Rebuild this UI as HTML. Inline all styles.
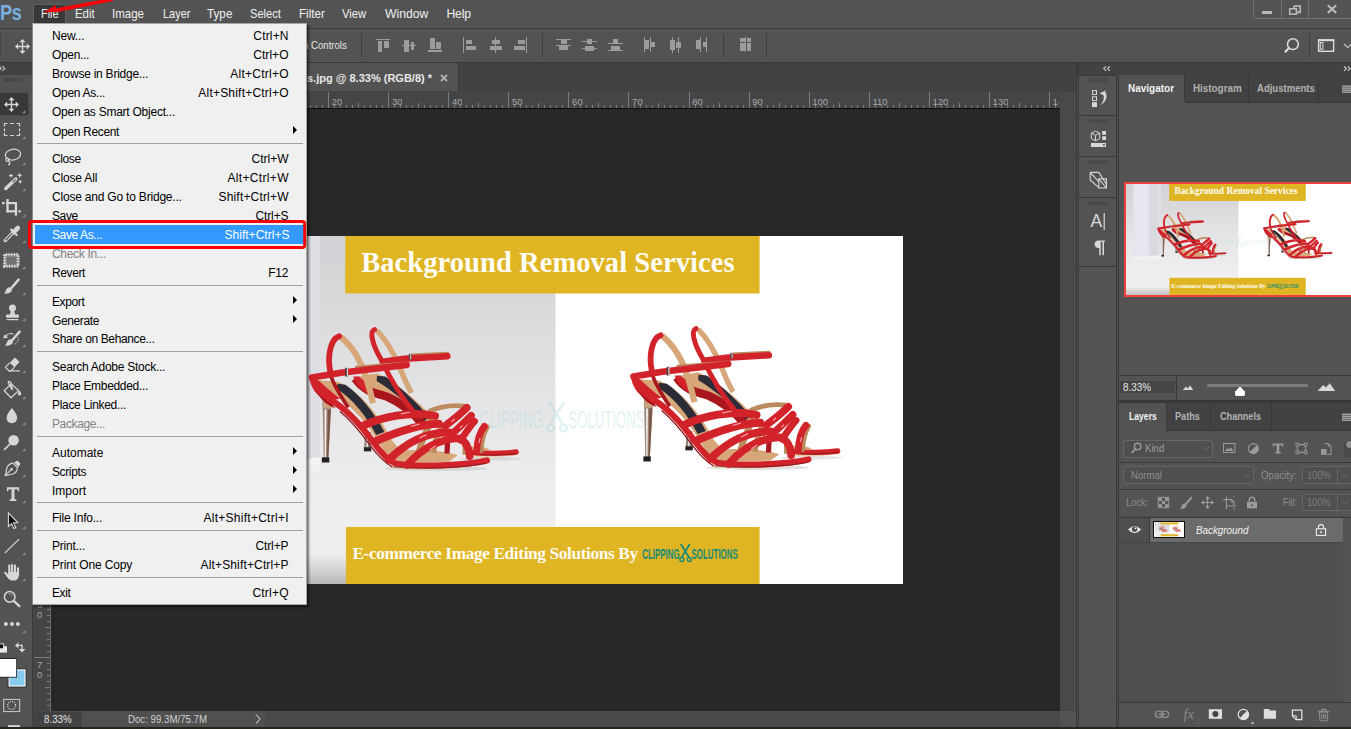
<!DOCTYPE html>
<html>
<head>
<meta charset="utf-8">
<title>Photoshop</title>
<style>
*{box-sizing:border-box;margin:0;padding:0}
html,body{width:1351px;height:729px;overflow:hidden;background:#535353;font-family:"Liberation Sans",sans-serif;font-size:12px;color:#ddd}
.abs{position:absolute}
#root{position:relative;width:1351px;height:729px;overflow:hidden;background:#535353}
svg{position:absolute;overflow:visible}
/* menubar */
#menubar{left:0;top:0;width:1351px;height:29px;background:#535353;border-bottom:1px solid #383838}
#menubar .mi{position:absolute;top:6px;font-size:12.5px;color:#ececec;white-space:pre;line-height:15px}
#filebtn{left:33px;top:4px;width:33px;height:19px;background:#383838;border:1px solid #626262;border-bottom:none;border-radius:2px 2px 0 0}
#optbar{left:0;top:29px;width:1351px;height:34px;background:#535353;border-bottom:1px solid #383838}
#tabbar{left:33px;top:63px;width:1045px;height:28px;background:#424242}
#doctab{left:0;top:0;width:426px;height:28px;background:#535353;border-right:1px solid #383838}
#hruler{left:33px;top:91px;width:1027px;height:18px;background:#454545;border-bottom:1px solid #111}
#vruler{left:33px;top:109px;width:18px;height:602px;background:#454545;border-right:1px solid #6c6c6c}
#canvas{left:51px;top:109px;width:1009px;height:602px;background:#282828;overflow:hidden}
#status{left:33px;top:711px;width:1045px;height:16px;background:#4a4a4a}
#toolbar{left:0;top:63px;width:33px;height:666px;background:#535353}
#gutter{left:1060px;top:92px;width:16px;height:635px;background:#494949}
/* menu */
#menu{left:32px;top:23px;width:275px;height:582px;background:#f0f0f0;border:1px solid #a6a6a6;border-left:1px solid #8a8a8a;box-shadow:2px 2px 2px rgba(0,0,0,.5);color:#000}
.row{position:absolute;left:1px;width:272px;height:19px;font-size:12px;color:#000;line-height:14px}
.row .l{position:absolute;left:18px;top:3px;white-space:pre}
.row .r{position:absolute;right:17.5px;top:3px;white-space:pre;font-size:12px}
.row.dis{color:#838383}
.row.hl{background:#3399ff;color:#fff;left:2px;width:270px}
.row.hl .l{left:17px}
.row.hl .r{right:15.5px}
.sep{position:absolute;left:4px;width:266px;height:1px;background:#a0a0a0}
.arr{position:absolute;right:9px;top:4.5px;width:0;height:0;border-left:4px solid #000;border-top:4px solid transparent;border-bottom:4px solid transparent}
.t{position:absolute;white-space:pre}

</style>
</head>
<body>
<div id="root">
<div id="menubar" class="abs">
<span class="t" style="left:0.2px;top:0.3px;font-size:22px;line-height:26px;font-weight:700;color:#7ab0e4;transform:scaleX(.82);transform-origin:0 0;letter-spacing:-0.2px">Ps</span>
<div id="filebtn" class="abs"></div>
<span class="t" style="left:40.7px;top:6.8px;font-size:12.2px;line-height:15px;color:#f0f0f0;transform:scaleX(0.891);transform-origin:0 50%;">File</span>
<span class="t" style="left:75.3px;top:6.8px;font-size:12.2px;line-height:15px;color:#f0f0f0;transform:scaleX(0.937);transform-origin:0 50%;">Edit</span>
<span class="t" style="left:112.0px;top:6.8px;font-size:12.2px;line-height:15px;color:#f0f0f0;transform:scaleX(0.945);transform-origin:0 50%;">Image</span>
<span class="t" style="left:162.6px;top:6.8px;font-size:12.2px;line-height:15px;color:#f0f0f0;transform:scaleX(0.898);transform-origin:0 50%;">Layer</span>
<span class="t" style="left:206.8px;top:6.8px;font-size:12.2px;line-height:15px;color:#f0f0f0;transform:scaleX(0.961);transform-origin:0 50%;">Type</span>
<span class="t" style="left:250.0px;top:6.8px;font-size:12.2px;line-height:15px;color:#f0f0f0;transform:scaleX(0.912);transform-origin:0 50%;">Select</span>
<span class="t" style="left:299.4px;top:6.8px;font-size:12.2px;line-height:15px;color:#f0f0f0;transform:scaleX(0.956);transform-origin:0 50%;">Filter</span>
<span class="t" style="left:342.3px;top:6.8px;font-size:12.2px;line-height:15px;color:#f0f0f0;transform:scaleX(0.927);transform-origin:0 50%;">View</span>
<span class="t" style="left:385.0px;top:6.8px;font-size:12.2px;line-height:15px;color:#f0f0f0;letter-spacing:0.01px;">Window</span>
<span class="t" style="left:446.5px;top:6.8px;font-size:12.2px;line-height:15px;color:#f0f0f0;letter-spacing:-0.19px;">Help</span>
<div class="abs" style="left:1253px;top:-1px;width:100px;height:20px;border:1px solid #707070;border-radius:0 0 0 4px"></div>
<div class="abs" style="left:1281px;top:0;width:1px;height:18px;background:#707070"></div>
<div class="abs" style="left:1308px;top:0;width:1px;height:18px;background:#707070"></div>
<div class="abs" style="left:1262px;top:11px;width:10px;height:3px;background:#b8b8b8"></div>
<svg style="left:1286px;top:3px" width="18" height="14" viewBox="1286 3 18 14"><path d="M1293.9 6.1h6.3v6.3h-3.2 M1293.9 8v-1.9" fill="none" stroke="#b8b8b8" stroke-width="1.6"/><rect x="1289.7" y="8.8" width="6.7" height="5.4" fill="none" stroke="#b8b8b8" stroke-width="1.6"/></svg>
<svg style="left:1325px;top:3px" width="14" height="12" viewBox="1325 3 14 12"><path d="M1327.8 5.3l8.4 7.6 M1336.2 5.3l-8.4 7.6" fill="none" stroke="#b8b8b8" stroke-width="2.2"/></svg>
</div>

<div id="optbar" class="abs"></div>
<div class="abs" style="left:0px;top:33px;width:1px;height:25px;background:repeating-linear-gradient(180deg,#3e3e3e 0 1px,transparent 1px 2px)"></div>
<svg style="left:15px;top:39px" width="15" height="15" viewBox="0 0 15 15"><path d="M7.5 0l3 3.2h-2.3v3.6h3.6v-2.3l3.2 3-3.2 3v-2.3h-3.6v3.6h2.3l-3 3.2-3-3.2h2.3v-3.6h-3.6v2.3l-3.2-3 3.2-3v2.3h3.6v-3.6h-2.3z" fill="#d6d6d6"/></svg>
<span class="t" style="left:310.8px;top:39.1px;font-size:11px;line-height:13px;color:#e4e4e4;transform:scaleX(0.874);transform-origin:0 50%;">Controls</span>
<span class="t" style="left:299.6px;top:39.1px;font-size:11px;line-height:13px;color:#e4e4e4;">m</span>
<div class="abs" style="left:361px;top:34px;width:1px;height:23px;background:#3d3d3d"></div>
<svg style="left:0;top:0" width="1351" height="70" viewBox="0 0 1351 70" shape-rendering="crispEdges"><rect x="376" y="38.5" width="14" height="1.2" fill="#9c9c9c"/><rect x="377.5" y="41" width="4.5" height="11" fill="#9c9c9c"/><rect x="384" y="41" width="4.5" height="7" fill="#9c9c9c"/><rect x="402" y="45" width="14" height="1.2" fill="#9c9c9c"/><rect x="404" y="39.5" width="4.7" height="12" fill="#9c9c9c"/><rect x="410.5" y="41.5" width="3.7" height="8" fill="#9c9c9c"/><rect x="428" y="50.3" width="14" height="1.2" fill="#9c9c9c"/><rect x="430" y="38" width="4.5" height="11" fill="#9c9c9c"/><rect x="436" y="42" width="4.5" height="7" fill="#9c9c9c"/><rect x="463" y="37" width="1.2" height="15.5" fill="#9c9c9c"/><rect x="465.5" y="40" width="6.5" height="4.2" fill="#9c9c9c"/><rect x="465.5" y="46" width="10.5" height="4.2" fill="#9c9c9c"/><rect x="495" y="37" width="1.2" height="15.5" fill="#9c9c9c"/><rect x="491.5" y="40" width="8" height="4.2" fill="#9c9c9c"/><rect x="489.6" y="46" width="12" height="4.2" fill="#9c9c9c"/><rect x="526.2" y="37" width="1.2" height="15.5" fill="#9c9c9c"/><rect x="518" y="40" width="7" height="4.2" fill="#9c9c9c"/><rect x="514" y="46" width="11" height="4.2" fill="#9c9c9c"/><rect x="556" y="39" width="15" height="1" fill="#9c9c9c"/><rect x="561" y="40" width="5.6" height="4" fill="#9c9c9c"/><rect x="556" y="45.3" width="15" height="1" fill="#9c9c9c"/><rect x="559" y="46.3" width="9" height="3.8" fill="#9c9c9c"/><rect x="582" y="41" width="15" height="1" fill="#9c9c9c"/><rect x="587" y="39" width="5" height="5" fill="#9c9c9c"/><rect x="582" y="48" width="15" height="1" fill="#9c9c9c"/><rect x="585" y="46" width="9" height="5" fill="#9c9c9c"/><rect x="608" y="43.2" width="15" height="1" fill="#9c9c9c"/><rect x="613" y="39" width="5" height="4.2" fill="#9c9c9c"/><rect x="608" y="50.2" width="15" height="1" fill="#9c9c9c"/><rect x="611.4" y="46.3" width="8.6" height="3.9" fill="#9c9c9c"/><rect x="644" y="37" width="1" height="15" fill="#9c9c9c"/><rect x="645" y="40" width="3.8" height="8.8" fill="#9c9c9c"/><rect x="650" y="37" width="1" height="15" fill="#9c9c9c"/><rect x="651" y="42" width="4" height="5" fill="#9c9c9c"/><rect x="672" y="37" width="1" height="16" fill="#9c9c9c"/><rect x="670" y="40" width="5" height="9.5" fill="#9c9c9c"/><rect x="678.2" y="37" width="1" height="16" fill="#9c9c9c"/><rect x="676.4" y="42" width="4.8" height="6" fill="#9c9c9c"/><rect x="700" y="37" width="1" height="15" fill="#9c9c9c"/><rect x="696" y="40" width="4" height="9" fill="#9c9c9c"/><rect x="706" y="37" width="1" height="15" fill="#9c9c9c"/><rect x="703" y="42" width="3" height="5" fill="#9c9c9c"/><rect x="745.2" y="37" width="1" height="15" fill="#9c9c9c"/><rect x="740" y="38" width="4.5" height="3.5" fill="#9c9c9c"/><rect x="740" y="42.8" width="4.5" height="8.2" fill="#9c9c9c"/><rect x="746.9" y="38" width="4.4" height="3.5" fill="#9c9c9c"/><rect x="746.9" y="42.8" width="4.4" height="8.2" fill="#9c9c9c"/></svg>
<div class="abs" style="left:542px;top:34px;width:1px;height:23px;background:#3d3d3d"></div>
<div class="abs" style="left:723px;top:34px;width:1px;height:23px;background:#3d3d3d"></div>
<div class="abs" style="left:766px;top:34px;width:1px;height:23px;background:#3d3d3d"></div>
<svg style="left:1283px;top:36px" width="18" height="18" viewBox="1283 36 18 18"><circle cx="1292.9" cy="44.2" r="5.4" fill="none" stroke="#dcdcdc" stroke-width="1.5"/><path d="M1288.9 48.3l-3.4 3.3" stroke="#dcdcdc" stroke-width="2.2" stroke-linecap="round"/></svg>
<div class="abs" style="left:1309px;top:34px;width:1px;height:23px;background:#3d3d3d"></div>
<svg style="left:1316px;top:37px" width="36" height="17" viewBox="1316 37 36 17"><rect x="1318.6" y="40" width="15" height="11.3" fill="none" stroke="#dcdcdc" stroke-width="1.4"/><rect x="1318" y="39.2" width="16.2" height="2" fill="#dcdcdc"/><rect x="1320.3" y="42.6" width="2.6" height="6.6" fill="none" stroke="#dcdcdc" stroke-width="1"/><path d="M1343.8 43.8l4 3.8 4-3.8" fill="none" stroke="#cfcfcf" stroke-width="1.1"/></svg>

<div id="toolbar" class="abs"></div>
<div class="abs" style="left:0;top:63px;width:32px;height:12px;background:#424242"></div>
<div class="abs" style="left:32px;top:63px;width:1px;height:666px;background:#3c3c3c"></div>
<div class="abs" style="left:-3px;top:92px;width:32px;height:24px;background:#383838;border-radius:3px;border:1px solid #4a4a4a"></div>
<svg style="left:0;top:0" width="34" height="729" viewBox="0 0 34 729"><path d="M-1 66l2.4 2.4-2.4 2.4 M2.4 66l2.4 2.4-2.4 2.4" fill="none" stroke="#c0c0c0" stroke-width="1.1"/><rect x="3" y="78" width="1" height="4" fill="#3e3e3e"/><rect x="5" y="78" width="1" height="4" fill="#3e3e3e"/><rect x="7" y="78" width="1" height="4" fill="#3e3e3e"/><rect x="9" y="78" width="1" height="4" fill="#3e3e3e"/><rect x="11" y="78" width="1" height="4" fill="#3e3e3e"/><rect x="13" y="78" width="1" height="4" fill="#3e3e3e"/><rect x="15" y="78" width="1" height="4" fill="#3e3e3e"/><rect x="17" y="78" width="1" height="4" fill="#3e3e3e"/><rect x="19" y="78" width="1" height="4" fill="#3e3e3e"/><rect x="21" y="78" width="1" height="4" fill="#3e3e3e"/><path d="M25.4 110.1v3.2h-3.2z" fill="#8e8e8e"/><path d="M25.4 136.1v3.2h-3.2z" fill="#8e8e8e"/><path d="M25.4 162.1v3.2h-3.2z" fill="#8e8e8e"/><path d="M25.4 188.1v3.2h-3.2z" fill="#8e8e8e"/><path d="M25.4 214.1v3.2h-3.2z" fill="#8e8e8e"/><path d="M25.4 240.1v3.2h-3.2z" fill="#8e8e8e"/><path d="M25.4 266.1v3.2h-3.2z" fill="#8e8e8e"/><path d="M25.4 292.1v3.2h-3.2z" fill="#8e8e8e"/><path d="M25.4 318.1v3.2h-3.2z" fill="#8e8e8e"/><path d="M25.4 344.1v3.2h-3.2z" fill="#8e8e8e"/><path d="M25.4 370.1v3.2h-3.2z" fill="#8e8e8e"/><path d="M25.4 396.1v3.2h-3.2z" fill="#8e8e8e"/><path d="M25.4 422.1v3.2h-3.2z" fill="#8e8e8e"/><path d="M25.4 448.1v3.2h-3.2z" fill="#8e8e8e"/><path d="M25.4 474.1v3.2h-3.2z" fill="#8e8e8e"/><path d="M25.4 500.1v3.2h-3.2z" fill="#8e8e8e"/><path d="M25.4 526.1v3.2h-3.2z" fill="#8e8e8e"/><path d="M25.4 552.1v3.2h-3.2z" fill="#8e8e8e"/><path d="M25.4 578.1v3.2h-3.2z" fill="#8e8e8e"/><path d="M25.4 630.1v3.2h-3.2z" fill="#8e8e8e"/><g transform="translate(4,97)"><path d="M7.5 0l3 3.2h-2.3v3.6h3.6v-2.3l3.2 3-3.2 3v-2.3h-3.6v3.6h2.3l-3 3.2-3-3.2h2.3v-3.6h-3.6v2.3l-3.2-3 3.2-3v2.3h3.6v-3.6h-2.3z" fill="#d6d6d6"/></g><path d="M4.5 126.5v-3h3 M10 123.5h4 M16.5 123.5h3v3 M19.5 128.5v3 M19.5 133v2.5h-3 M14 135.5h-4 M7.5 135.5h-3v-2.5 M4.5 131.5v-3" fill="none" stroke="#d6d6d6" stroke-width="1.2"/><g fill="none" stroke="#d6d6d6" stroke-width="1.25"><ellipse cx="13" cy="154.6" rx="7.7" ry="5.3" transform="rotate(-10 13 154.6)"/><circle cx="7.4" cy="159.8" r="1.6"/><path d="M8.6 160.9q2 1.6 0.6 3.8h-1.2"/></g><path d="M5.8 188.6l10-9.6" stroke="#d6d6d6" stroke-width="3.4" stroke-linecap="round"/><path d="M13 181.8l2.2-2.1" stroke="#666" stroke-width="1.2" stroke-linecap="round"/><path d="M9.1 175.6h3.8 M11 173.7v3.8" stroke="#d6d6d6" stroke-width="1.1"/><path d="M17.5 175.4h4.2 M19.6 173.3v4.2" stroke="#d6d6d6" stroke-width="1.1"/><path d="M18.599999999999998 181.6h3.2 M20.2 180.0v3.2" stroke="#d6d6d6" stroke-width="1.1"/><g fill="#d6d6d6"><rect x="6.4" y="199" width="2.3" height="13.4"/><rect x="6.4" y="210.2" width="10.6" height="2.2"/><rect x="18.4" y="210.2" width="2.4" height="2.2"/><rect x="14.8" y="202" width="2.3" height="13.6"/><rect x="6" y="202" width="11" height="2.2"/><rect x="2" y="202" width="2.6" height="2.2"/></g><path d="M5.3 240.4l7.6-7.6" stroke="#d6d6d6" stroke-width="3.6" stroke-linecap="round"/><path d="M5.7 240l6.4-6.4" stroke="#555" stroke-width="1.3" stroke-linecap="round"/><path d="M14.2 231.6l3.6-3.6" stroke="#d6d6d6" stroke-width="4.6" stroke-linecap="round"/><path d="M11.2 229.6l5.4 5.4" stroke="#d6d6d6" stroke-width="2.2" stroke-linecap="round"/><rect x="5.4" y="255.2" width="12" height="10.4" fill="#727272"/><rect x="4.7" y="254.6" width="13.4" height="11.6" fill="none" stroke="#d6d6d6" stroke-width="1.1"/><rect x="4.7" y="254.6" width="13.4" height="11.6" fill="none" stroke="#d6d6d6" stroke-width="3.6" stroke-dasharray="1.1 1.55" stroke-dashoffset="-1.2"/><g transform="translate(0,0)"><path d="M18.6 279.6l-7.4 8.6" stroke="#d6d6d6" stroke-width="2.5" stroke-linecap="round"/><path d="M10.6 287.6q-2.8-1-4.2 1.6q-0.8 2.6-2.4 4.4q4.6 0.6 7.2-1.8q1.6-2-0.6-4.2z" fill="#d6d6d6"/></g><g fill="#d6d6d6"><circle cx="12.5" cy="308" r="3.5"/><path d="M11 310.5h3l1.2 4.6h-5.4z"/><rect x="6" y="314.6" width="12.9" height="3.2" rx="0.8"/><rect x="6.6" y="319" width="11.8" height="1.2"/></g><g transform="translate(1,52)"><path d="M18.6 279.6l-7.4 8.6" stroke="#d6d6d6" stroke-width="2.5" stroke-linecap="round"/><path d="M10.6 287.6q-2.8-1-4.2 1.6q-0.8 2.6-2.4 4.4q4.6 0.6 7.2-1.8q1.6-2-0.6-4.2z" fill="#d6d6d6"/></g><path d="M13.4 334q-4.2-1.6-8 2" fill="none" stroke="#d6d6d6" stroke-width="1.2"/><path d="M3 338.2l5.2-0.4-3.4-3.4z" fill="#d6d6d6"/><circle cx="18" cy="337.6" r="0.65" fill="#d6d6d6"/><circle cx="18.2" cy="340" r="0.65" fill="#d6d6d6"/><circle cx="17.2" cy="342.2" r="0.65" fill="#d6d6d6"/><circle cx="15.4" cy="343.8" r="0.65" fill="#d6d6d6"/><path d="M14.9 357.6l4.8 4.3-5.2 5.3-4.8-4.4z" fill="#d6d6d6"/><path d="M9.7 362.8l-4.3 4.4 3.6 3.6h2l3.5-3.6" fill="none" stroke="#d6d6d6" stroke-width="1.2"/><path d="M9 370.9h11" stroke="#d6d6d6" stroke-width="1.2"/><g fill="none" stroke="#d6d6d6" stroke-width="1.3"><path d="M4.2 390.8l7-7 7.4 6.8-7.6 7.2z"/><path d="M11.4 388.4l-3-5.2q-0.6-1.6 0.6-1.8q1.2 0 1.8 1.6l1.4 5"/></g><circle cx="12" cy="389" r="1.1" fill="#d6d6d6"/><path d="M19.6 390.6q2.2 2.6 1.6 4.2q-1.6 1.6-3.2 0q-0.4-2 1.6-4.2z" fill="#d6d6d6"/><path d="M11.8 408q5.6 6.6 5.4 10.2q-0.6 4.8-5.4 5q-4.8-0.2-5.2-5q-0.2-3.6 5.2-10.2z" fill="#d6d6d6"/><circle cx="13.6" cy="440.2" r="5.3" fill="#d6d6d6"/><path d="M10 444l-5.4 5.4" stroke="#d6d6d6" stroke-width="1.7" stroke-linecap="round"/><g fill="none" stroke="#d6d6d6" stroke-width="1.2"><path d="M5.3 475.6l1.6-8q1.6-3.6 6-4.4l4.6 4.6q-0.6 4.6-4.6 6.2z"/><path d="M5.5 475.4l5.6-5.8"/></g><circle cx="11.6" cy="469.2" r="1.3" fill="#d6d6d6"/><path d="M14 462.4l3.4-1.8 3 3-1.8 3.6z" fill="#d6d6d6"/><path d="M6.9 487.2h12.2v4h-1.2l-0.6-1.9h-2.8v9.6l1.8 0.5v1.6h-6.6v-1.6l1.8-0.5v-9.6h-2.8l-0.6 1.9h-1.2z" fill="#d6d6d6"/><path d="M8.4 512.9v13.6l3.1-2.9 2.3 5 2-0.9-2.3-5 4.2-0.2z" fill="#111" stroke="#d6d6d6" stroke-width="1.1" stroke-linejoin="miter"/><path d="M5.2 552.6l13.6-13.2" stroke="#d6d6d6" stroke-width="1.3" stroke-linecap="round"/><g stroke="#d6d6d6" stroke-width="2.1" stroke-linecap="round"><path d="M9.3 565.6v7"/><path d="M12.1 565v7"/><path d="M15 565.6v7"/><path d="M18 568.4v6"/></g><path d="M8.2 572h10.9v3q-0.4 4-3.2 5.6h-5q-2.4-1-4.2-4l-2.8-4q1-1.6 2.6 0l1.7 2z" fill="#d6d6d6"/><circle cx="9.7" cy="596.9" r="5.3" fill="none" stroke="#d6d6d6" stroke-width="1.5"/><path d="M14 601.2l5.4 5" stroke="#d6d6d6" stroke-width="2.3" stroke-linecap="round"/><path d="M8.6 593.6q2.8-0.4 3.8 2.4" fill="none" stroke="#aaa" stroke-width="0.9"/><circle cx="5.9" cy="623.9" r="2" fill="#d6d6d6"/><circle cx="11.9" cy="623.9" r="2" fill="#d6d6d6"/><circle cx="17.9" cy="623.9" r="2" fill="#d6d6d6"/><rect x="-1" y="646.2" width="8" height="6.4" fill="#e6e6e6"/><rect x="-1" y="643.9" width="4.6" height="4.9" fill="#111" stroke="#e6e6e6" stroke-width="0.9"/><path d="M17.5 645.4h4.6v4.6" fill="none" stroke="#d6d6d6" stroke-width="1.3"/><path d="M15 645.4l3.4-3.2v6.4z M22.1 652.4l-3.2-3.4h6.4z" fill="#d6d6d6"/><rect x="7.7" y="668.5" width="18.7" height="18.9" fill="#222"/><rect x="8.5" y="669.3" width="17.1" height="17.3" fill="#fff"/><rect x="9.6" y="670.4" width="14.9" height="15.1" fill="#86caee"/><rect x="-1" y="658.2" width="18" height="19.4" fill="#1c1c1c"/><rect x="-1" y="659" width="17.2" height="17.8" fill="#fff"/><rect x="3.7" y="699.4" width="16" height="12.2" fill="none" stroke="#cfcfcf" stroke-width="1"/><circle cx="11.6" cy="705.5" r="4" fill="none" stroke="#e6e6e6" stroke-width="1.1" stroke-dasharray="1 1.1"/><rect x="8" y="725.2" width="12" height="2" fill="#dcdcdc"/></svg>

<div id="tabbar" class="abs"><div id="doctab" class="abs"></div></div>
<span class="t" style="left:307.0px;top:71.9px;font-size:11px;line-height:13px;color:#e8e8e8;font-weight:700;">s.jpg @ 8.33% (RGB/8) *</span>
<svg style="left:440px;top:74px" width="8" height="8" viewBox="0 0 8 8"><path d="M1 1l6 6M7 1l-6 6" stroke="#b0b0b0" stroke-width="1.8"/></svg>
<div class="abs" style="left:33px;top:91px;width:1045px;height:1px;background:#3c3c3c"></div>
<div id="hruler" class="abs"></div>
<div id="vruler" class="abs"></div>
<div id="canvas" class="abs"></div>
<svg style="left:0;top:0" width="1080" height="729" viewBox="0 0 1080 729" shape-rendering="crispEdges"><rect x="52" y="105" width="1" height="3" fill="#7c7c7c"/><rect x="58" y="103" width="1" height="5" fill="#7c7c7c"/><rect x="64" y="105" width="1" height="3" fill="#7c7c7c"/><rect x="70" y="105" width="1" height="3" fill="#7c7c7c"/><rect x="76" y="105" width="1" height="3" fill="#7c7c7c"/><rect x="82" y="105" width="1" height="3" fill="#7c7c7c"/><rect x="88" y="92" width="1" height="16" fill="#7c7c7c"/><rect x="94" y="105" width="1" height="3" fill="#7c7c7c"/><rect x="100" y="105" width="1" height="3" fill="#7c7c7c"/><rect x="106" y="105" width="1" height="3" fill="#7c7c7c"/><rect x="112" y="105" width="1" height="3" fill="#7c7c7c"/><rect x="118" y="103" width="1" height="5" fill="#7c7c7c"/><rect x="124" y="105" width="1" height="3" fill="#7c7c7c"/><rect x="130" y="105" width="1" height="3" fill="#7c7c7c"/><rect x="136" y="105" width="1" height="3" fill="#7c7c7c"/><rect x="142" y="105" width="1" height="3" fill="#7c7c7c"/><rect x="148" y="92" width="1" height="16" fill="#7c7c7c"/><rect x="154" y="105" width="1" height="3" fill="#7c7c7c"/><rect x="160" y="105" width="1" height="3" fill="#7c7c7c"/><rect x="166" y="105" width="1" height="3" fill="#7c7c7c"/><rect x="172" y="105" width="1" height="3" fill="#7c7c7c"/><rect x="178" y="103" width="1" height="5" fill="#7c7c7c"/><rect x="184" y="105" width="1" height="3" fill="#7c7c7c"/><rect x="190" y="105" width="1" height="3" fill="#7c7c7c"/><rect x="196" y="105" width="1" height="3" fill="#7c7c7c"/><rect x="202" y="105" width="1" height="3" fill="#7c7c7c"/><rect x="208" y="92" width="1" height="16" fill="#7c7c7c"/><rect x="214" y="105" width="1" height="3" fill="#7c7c7c"/><rect x="220" y="105" width="1" height="3" fill="#7c7c7c"/><rect x="226" y="105" width="1" height="3" fill="#7c7c7c"/><rect x="232" y="105" width="1" height="3" fill="#7c7c7c"/><rect x="238" y="103" width="1" height="5" fill="#7c7c7c"/><rect x="244" y="105" width="1" height="3" fill="#7c7c7c"/><rect x="250" y="105" width="1" height="3" fill="#7c7c7c"/><rect x="256" y="105" width="1" height="3" fill="#7c7c7c"/><rect x="262" y="105" width="1" height="3" fill="#7c7c7c"/><rect x="268" y="92" width="1" height="16" fill="#7c7c7c"/><rect x="274" y="105" width="1" height="3" fill="#7c7c7c"/><rect x="280" y="105" width="1" height="3" fill="#7c7c7c"/><rect x="286" y="105" width="1" height="3" fill="#7c7c7c"/><rect x="292" y="105" width="1" height="3" fill="#7c7c7c"/><rect x="298" y="103" width="1" height="5" fill="#7c7c7c"/><rect x="304" y="105" width="1" height="3" fill="#7c7c7c"/><rect x="310" y="105" width="1" height="3" fill="#7c7c7c"/><rect x="316" y="105" width="1" height="3" fill="#7c7c7c"/><rect x="322" y="105" width="1" height="3" fill="#7c7c7c"/><rect x="328" y="92" width="1" height="16" fill="#7c7c7c"/><rect x="334" y="105" width="1" height="3" fill="#7c7c7c"/><rect x="340" y="105" width="1" height="3" fill="#7c7c7c"/><rect x="346" y="105" width="1" height="3" fill="#7c7c7c"/><rect x="352" y="105" width="1" height="3" fill="#7c7c7c"/><rect x="358" y="103" width="1" height="5" fill="#7c7c7c"/><rect x="364" y="105" width="1" height="3" fill="#7c7c7c"/><rect x="370" y="105" width="1" height="3" fill="#7c7c7c"/><rect x="376" y="105" width="1" height="3" fill="#7c7c7c"/><rect x="382" y="105" width="1" height="3" fill="#7c7c7c"/><rect x="388" y="92" width="1" height="16" fill="#7c7c7c"/><rect x="394" y="105" width="1" height="3" fill="#7c7c7c"/><rect x="400" y="105" width="1" height="3" fill="#7c7c7c"/><rect x="406" y="105" width="1" height="3" fill="#7c7c7c"/><rect x="412" y="105" width="1" height="3" fill="#7c7c7c"/><rect x="418" y="103" width="1" height="5" fill="#7c7c7c"/><rect x="424" y="105" width="1" height="3" fill="#7c7c7c"/><rect x="430" y="105" width="1" height="3" fill="#7c7c7c"/><rect x="436" y="105" width="1" height="3" fill="#7c7c7c"/><rect x="442" y="105" width="1" height="3" fill="#7c7c7c"/><rect x="448" y="92" width="1" height="16" fill="#7c7c7c"/><rect x="454" y="105" width="1" height="3" fill="#7c7c7c"/><rect x="460" y="105" width="1" height="3" fill="#7c7c7c"/><rect x="466" y="105" width="1" height="3" fill="#7c7c7c"/><rect x="472" y="105" width="1" height="3" fill="#7c7c7c"/><rect x="478" y="103" width="1" height="5" fill="#7c7c7c"/><rect x="484" y="105" width="1" height="3" fill="#7c7c7c"/><rect x="490" y="105" width="1" height="3" fill="#7c7c7c"/><rect x="496" y="105" width="1" height="3" fill="#7c7c7c"/><rect x="502" y="105" width="1" height="3" fill="#7c7c7c"/><rect x="508" y="92" width="1" height="16" fill="#7c7c7c"/><rect x="514" y="105" width="1" height="3" fill="#7c7c7c"/><rect x="520" y="105" width="1" height="3" fill="#7c7c7c"/><rect x="526" y="105" width="1" height="3" fill="#7c7c7c"/><rect x="532" y="105" width="1" height="3" fill="#7c7c7c"/><rect x="538" y="103" width="1" height="5" fill="#7c7c7c"/><rect x="544" y="105" width="1" height="3" fill="#7c7c7c"/><rect x="550" y="105" width="1" height="3" fill="#7c7c7c"/><rect x="556" y="105" width="1" height="3" fill="#7c7c7c"/><rect x="562" y="105" width="1" height="3" fill="#7c7c7c"/><rect x="568" y="92" width="1" height="16" fill="#7c7c7c"/><rect x="574" y="105" width="1" height="3" fill="#7c7c7c"/><rect x="580" y="105" width="1" height="3" fill="#7c7c7c"/><rect x="586" y="105" width="1" height="3" fill="#7c7c7c"/><rect x="592" y="105" width="1" height="3" fill="#7c7c7c"/><rect x="598" y="103" width="1" height="5" fill="#7c7c7c"/><rect x="604" y="105" width="1" height="3" fill="#7c7c7c"/><rect x="610" y="105" width="1" height="3" fill="#7c7c7c"/><rect x="616" y="105" width="1" height="3" fill="#7c7c7c"/><rect x="622" y="105" width="1" height="3" fill="#7c7c7c"/><rect x="628" y="92" width="1" height="16" fill="#7c7c7c"/><rect x="634" y="105" width="1" height="3" fill="#7c7c7c"/><rect x="640" y="105" width="1" height="3" fill="#7c7c7c"/><rect x="646" y="105" width="1" height="3" fill="#7c7c7c"/><rect x="652" y="105" width="1" height="3" fill="#7c7c7c"/><rect x="658" y="103" width="1" height="5" fill="#7c7c7c"/><rect x="664" y="105" width="1" height="3" fill="#7c7c7c"/><rect x="670" y="105" width="1" height="3" fill="#7c7c7c"/><rect x="676" y="105" width="1" height="3" fill="#7c7c7c"/><rect x="683" y="105" width="1" height="3" fill="#7c7c7c"/><rect x="689" y="92" width="1" height="16" fill="#7c7c7c"/><rect x="695" y="105" width="1" height="3" fill="#7c7c7c"/><rect x="701" y="105" width="1" height="3" fill="#7c7c7c"/><rect x="707" y="105" width="1" height="3" fill="#7c7c7c"/><rect x="713" y="105" width="1" height="3" fill="#7c7c7c"/><rect x="719" y="103" width="1" height="5" fill="#7c7c7c"/><rect x="725" y="105" width="1" height="3" fill="#7c7c7c"/><rect x="731" y="105" width="1" height="3" fill="#7c7c7c"/><rect x="737" y="105" width="1" height="3" fill="#7c7c7c"/><rect x="743" y="105" width="1" height="3" fill="#7c7c7c"/><rect x="749" y="92" width="1" height="16" fill="#7c7c7c"/><rect x="755" y="105" width="1" height="3" fill="#7c7c7c"/><rect x="761" y="105" width="1" height="3" fill="#7c7c7c"/><rect x="767" y="105" width="1" height="3" fill="#7c7c7c"/><rect x="773" y="105" width="1" height="3" fill="#7c7c7c"/><rect x="779" y="103" width="1" height="5" fill="#7c7c7c"/><rect x="785" y="105" width="1" height="3" fill="#7c7c7c"/><rect x="791" y="105" width="1" height="3" fill="#7c7c7c"/><rect x="797" y="105" width="1" height="3" fill="#7c7c7c"/><rect x="803" y="105" width="1" height="3" fill="#7c7c7c"/><rect x="809" y="92" width="1" height="16" fill="#7c7c7c"/><rect x="815" y="105" width="1" height="3" fill="#7c7c7c"/><rect x="821" y="105" width="1" height="3" fill="#7c7c7c"/><rect x="827" y="105" width="1" height="3" fill="#7c7c7c"/><rect x="833" y="105" width="1" height="3" fill="#7c7c7c"/><rect x="839" y="103" width="1" height="5" fill="#7c7c7c"/><rect x="845" y="105" width="1" height="3" fill="#7c7c7c"/><rect x="851" y="105" width="1" height="3" fill="#7c7c7c"/><rect x="857" y="105" width="1" height="3" fill="#7c7c7c"/><rect x="863" y="105" width="1" height="3" fill="#7c7c7c"/><rect x="869" y="92" width="1" height="16" fill="#7c7c7c"/><rect x="875" y="105" width="1" height="3" fill="#7c7c7c"/><rect x="881" y="105" width="1" height="3" fill="#7c7c7c"/><rect x="887" y="105" width="1" height="3" fill="#7c7c7c"/><rect x="893" y="105" width="1" height="3" fill="#7c7c7c"/><rect x="899" y="103" width="1" height="5" fill="#7c7c7c"/><rect x="905" y="105" width="1" height="3" fill="#7c7c7c"/><rect x="911" y="105" width="1" height="3" fill="#7c7c7c"/><rect x="917" y="105" width="1" height="3" fill="#7c7c7c"/><rect x="923" y="105" width="1" height="3" fill="#7c7c7c"/><rect x="929" y="92" width="1" height="16" fill="#7c7c7c"/><rect x="935" y="105" width="1" height="3" fill="#7c7c7c"/><rect x="941" y="105" width="1" height="3" fill="#7c7c7c"/><rect x="947" y="105" width="1" height="3" fill="#7c7c7c"/><rect x="953" y="105" width="1" height="3" fill="#7c7c7c"/><rect x="959" y="103" width="1" height="5" fill="#7c7c7c"/><rect x="965" y="105" width="1" height="3" fill="#7c7c7c"/><rect x="971" y="105" width="1" height="3" fill="#7c7c7c"/><rect x="977" y="105" width="1" height="3" fill="#7c7c7c"/><rect x="983" y="105" width="1" height="3" fill="#7c7c7c"/><rect x="989" y="92" width="1" height="16" fill="#7c7c7c"/><rect x="995" y="105" width="1" height="3" fill="#7c7c7c"/><rect x="1001" y="105" width="1" height="3" fill="#7c7c7c"/><rect x="1007" y="105" width="1" height="3" fill="#7c7c7c"/><rect x="1013" y="105" width="1" height="3" fill="#7c7c7c"/><rect x="1019" y="103" width="1" height="5" fill="#7c7c7c"/><rect x="1025" y="105" width="1" height="3" fill="#7c7c7c"/><rect x="1031" y="105" width="1" height="3" fill="#7c7c7c"/><rect x="1037" y="105" width="1" height="3" fill="#7c7c7c"/><rect x="1043" y="105" width="1" height="3" fill="#7c7c7c"/><rect x="1049" y="92" width="1" height="16" fill="#7c7c7c"/><rect x="1055" y="105" width="1" height="3" fill="#7c7c7c"/><rect x="47" y="111" width="3" height="1" fill="#7c7c7c"/><rect x="34" y="117" width="16" height="1" fill="#7c7c7c"/><rect x="47" y="123" width="3" height="1" fill="#7c7c7c"/><rect x="47" y="129" width="3" height="1" fill="#7c7c7c"/><rect x="47" y="135" width="3" height="1" fill="#7c7c7c"/><rect x="47" y="141" width="3" height="1" fill="#7c7c7c"/><rect x="45" y="147" width="5" height="1" fill="#7c7c7c"/><rect x="47" y="153" width="3" height="1" fill="#7c7c7c"/><rect x="47" y="159" width="3" height="1" fill="#7c7c7c"/><rect x="47" y="165" width="3" height="1" fill="#7c7c7c"/><rect x="47" y="171" width="3" height="1" fill="#7c7c7c"/><rect x="34" y="177" width="16" height="1" fill="#7c7c7c"/><rect x="47" y="183" width="3" height="1" fill="#7c7c7c"/><rect x="47" y="189" width="3" height="1" fill="#7c7c7c"/><rect x="47" y="195" width="3" height="1" fill="#7c7c7c"/><rect x="47" y="201" width="3" height="1" fill="#7c7c7c"/><rect x="45" y="207" width="5" height="1" fill="#7c7c7c"/><rect x="47" y="213" width="3" height="1" fill="#7c7c7c"/><rect x="47" y="219" width="3" height="1" fill="#7c7c7c"/><rect x="47" y="225" width="3" height="1" fill="#7c7c7c"/><rect x="47" y="231" width="3" height="1" fill="#7c7c7c"/><rect x="34" y="237" width="16" height="1" fill="#7c7c7c"/><rect x="47" y="243" width="3" height="1" fill="#7c7c7c"/><rect x="47" y="249" width="3" height="1" fill="#7c7c7c"/><rect x="47" y="255" width="3" height="1" fill="#7c7c7c"/><rect x="47" y="261" width="3" height="1" fill="#7c7c7c"/><rect x="45" y="267" width="5" height="1" fill="#7c7c7c"/><rect x="47" y="273" width="3" height="1" fill="#7c7c7c"/><rect x="47" y="279" width="3" height="1" fill="#7c7c7c"/><rect x="47" y="285" width="3" height="1" fill="#7c7c7c"/><rect x="47" y="291" width="3" height="1" fill="#7c7c7c"/><rect x="34" y="297" width="16" height="1" fill="#7c7c7c"/><rect x="47" y="303" width="3" height="1" fill="#7c7c7c"/><rect x="47" y="309" width="3" height="1" fill="#7c7c7c"/><rect x="47" y="315" width="3" height="1" fill="#7c7c7c"/><rect x="47" y="321" width="3" height="1" fill="#7c7c7c"/><rect x="45" y="327" width="5" height="1" fill="#7c7c7c"/><rect x="47" y="333" width="3" height="1" fill="#7c7c7c"/><rect x="47" y="339" width="3" height="1" fill="#7c7c7c"/><rect x="47" y="345" width="3" height="1" fill="#7c7c7c"/><rect x="47" y="351" width="3" height="1" fill="#7c7c7c"/><rect x="34" y="357" width="16" height="1" fill="#7c7c7c"/><rect x="47" y="363" width="3" height="1" fill="#7c7c7c"/><rect x="47" y="369" width="3" height="1" fill="#7c7c7c"/><rect x="47" y="375" width="3" height="1" fill="#7c7c7c"/><rect x="47" y="381" width="3" height="1" fill="#7c7c7c"/><rect x="45" y="387" width="5" height="1" fill="#7c7c7c"/><rect x="47" y="393" width="3" height="1" fill="#7c7c7c"/><rect x="47" y="399" width="3" height="1" fill="#7c7c7c"/><rect x="47" y="405" width="3" height="1" fill="#7c7c7c"/><rect x="47" y="411" width="3" height="1" fill="#7c7c7c"/><rect x="34" y="417" width="16" height="1" fill="#7c7c7c"/><rect x="47" y="423" width="3" height="1" fill="#7c7c7c"/><rect x="47" y="429" width="3" height="1" fill="#7c7c7c"/><rect x="47" y="435" width="3" height="1" fill="#7c7c7c"/><rect x="47" y="441" width="3" height="1" fill="#7c7c7c"/><rect x="45" y="447" width="5" height="1" fill="#7c7c7c"/><rect x="47" y="453" width="3" height="1" fill="#7c7c7c"/><rect x="47" y="459" width="3" height="1" fill="#7c7c7c"/><rect x="47" y="465" width="3" height="1" fill="#7c7c7c"/><rect x="47" y="471" width="3" height="1" fill="#7c7c7c"/><rect x="34" y="477" width="16" height="1" fill="#7c7c7c"/><rect x="47" y="483" width="3" height="1" fill="#7c7c7c"/><rect x="47" y="489" width="3" height="1" fill="#7c7c7c"/><rect x="47" y="495" width="3" height="1" fill="#7c7c7c"/><rect x="47" y="501" width="3" height="1" fill="#7c7c7c"/><rect x="45" y="507" width="5" height="1" fill="#7c7c7c"/><rect x="47" y="513" width="3" height="1" fill="#7c7c7c"/><rect x="47" y="519" width="3" height="1" fill="#7c7c7c"/><rect x="47" y="525" width="3" height="1" fill="#7c7c7c"/><rect x="47" y="531" width="3" height="1" fill="#7c7c7c"/><rect x="34" y="537" width="16" height="1" fill="#7c7c7c"/><rect x="47" y="543" width="3" height="1" fill="#7c7c7c"/><rect x="47" y="549" width="3" height="1" fill="#7c7c7c"/><rect x="47" y="555" width="3" height="1" fill="#7c7c7c"/><rect x="47" y="561" width="3" height="1" fill="#7c7c7c"/><rect x="45" y="567" width="5" height="1" fill="#7c7c7c"/><rect x="47" y="573" width="3" height="1" fill="#7c7c7c"/><rect x="47" y="579" width="3" height="1" fill="#7c7c7c"/><rect x="47" y="585" width="3" height="1" fill="#7c7c7c"/><rect x="47" y="591" width="3" height="1" fill="#7c7c7c"/><rect x="34" y="597" width="16" height="1" fill="#7c7c7c"/><rect x="47" y="603" width="3" height="1" fill="#7c7c7c"/><rect x="47" y="609" width="3" height="1" fill="#7c7c7c"/><rect x="47" y="615" width="3" height="1" fill="#7c7c7c"/><rect x="47" y="621" width="3" height="1" fill="#7c7c7c"/><rect x="45" y="627" width="5" height="1" fill="#7c7c7c"/><rect x="47" y="633" width="3" height="1" fill="#7c7c7c"/><rect x="47" y="639" width="3" height="1" fill="#7c7c7c"/><rect x="47" y="645" width="3" height="1" fill="#7c7c7c"/><rect x="47" y="651" width="3" height="1" fill="#7c7c7c"/><rect x="34" y="657" width="16" height="1" fill="#7c7c7c"/><rect x="47" y="663" width="3" height="1" fill="#7c7c7c"/><rect x="47" y="669" width="3" height="1" fill="#7c7c7c"/><rect x="47" y="675" width="3" height="1" fill="#7c7c7c"/><rect x="47" y="681" width="3" height="1" fill="#7c7c7c"/><rect x="45" y="687" width="5" height="1" fill="#7c7c7c"/><rect x="47" y="693" width="3" height="1" fill="#7c7c7c"/><rect x="47" y="699" width="3" height="1" fill="#7c7c7c"/><rect x="47" y="705" width="3" height="1" fill="#7c7c7c"/></svg>
<span class="t" style="left:91.5px;top:95.9px;font-size:9.5px;line-height:11px;color:#a4a8ae;overflow:hidden;max-width:967px;">20</span>
<span class="t" style="left:151.6px;top:95.9px;font-size:9.5px;line-height:11px;color:#a4a8ae;overflow:hidden;max-width:907px;">10</span>
<span class="t" style="left:211.6px;top:95.9px;font-size:9.5px;line-height:11px;color:#a4a8ae;overflow:hidden;max-width:847px;">0</span>
<span class="t" style="left:271.7px;top:95.9px;font-size:9.5px;line-height:11px;color:#a4a8ae;overflow:hidden;max-width:787px;">10</span>
<span class="t" style="left:331.8px;top:95.9px;font-size:9.5px;line-height:11px;color:#a4a8ae;overflow:hidden;max-width:727px;">20</span>
<span class="t" style="left:391.9px;top:95.9px;font-size:9.5px;line-height:11px;color:#a4a8ae;overflow:hidden;max-width:667px;">30</span>
<span class="t" style="left:451.9px;top:95.9px;font-size:9.5px;line-height:11px;color:#a4a8ae;overflow:hidden;max-width:607px;">40</span>
<span class="t" style="left:512.0px;top:95.9px;font-size:9.5px;line-height:11px;color:#a4a8ae;overflow:hidden;max-width:547px;">50</span>
<span class="t" style="left:572.1px;top:95.9px;font-size:9.5px;line-height:11px;color:#a4a8ae;overflow:hidden;max-width:487px;">60</span>
<span class="t" style="left:632.1px;top:95.9px;font-size:9.5px;line-height:11px;color:#a4a8ae;overflow:hidden;max-width:427px;">70</span>
<span class="t" style="left:692.2px;top:95.9px;font-size:9.5px;line-height:11px;color:#a4a8ae;overflow:hidden;max-width:366px;">80</span>
<span class="t" style="left:752.3px;top:95.9px;font-size:9.5px;line-height:11px;color:#a4a8ae;overflow:hidden;max-width:306px;">90</span>
<span class="t" style="left:812.3px;top:95.9px;font-size:9.5px;line-height:11px;color:#a4a8ae;overflow:hidden;max-width:246px;">100</span>
<span class="t" style="left:872.4px;top:95.9px;font-size:9.5px;line-height:11px;color:#a4a8ae;overflow:hidden;max-width:186px;">110</span>
<span class="t" style="left:932.5px;top:95.9px;font-size:9.5px;line-height:11px;color:#a4a8ae;overflow:hidden;max-width:126px;">120</span>
<span class="t" style="left:992.6px;top:95.9px;font-size:9.5px;line-height:11px;color:#a4a8ae;overflow:hidden;max-width:66px;">130</span>
<span class="t" style="left:1052.6px;top:95.9px;font-size:9.5px;line-height:11px;color:#a4a8ae;overflow:hidden;max-width:6px;">140</span>
<span class="t" style="left:37.0px;top:118.7px;font-size:9.5px;line-height:11px;color:#a4a8ae;">2</span>
<span class="t" style="left:37.0px;top:129.0px;font-size:9.5px;line-height:11px;color:#a4a8ae;">0</span>
<span class="t" style="left:37.0px;top:178.7px;font-size:9.5px;line-height:11px;color:#a4a8ae;">1</span>
<span class="t" style="left:37.0px;top:189.0px;font-size:9.5px;line-height:11px;color:#a4a8ae;">0</span>
<span class="t" style="left:37.0px;top:238.7px;font-size:9.5px;line-height:11px;color:#a4a8ae;">0</span>
<span class="t" style="left:37.0px;top:298.7px;font-size:9.5px;line-height:11px;color:#a4a8ae;">1</span>
<span class="t" style="left:37.0px;top:309.0px;font-size:9.5px;line-height:11px;color:#a4a8ae;">0</span>
<span class="t" style="left:37.0px;top:358.7px;font-size:9.5px;line-height:11px;color:#a4a8ae;">2</span>
<span class="t" style="left:37.0px;top:369.0px;font-size:9.5px;line-height:11px;color:#a4a8ae;">0</span>
<span class="t" style="left:37.0px;top:418.7px;font-size:9.5px;line-height:11px;color:#a4a8ae;">3</span>
<span class="t" style="left:37.0px;top:429.0px;font-size:9.5px;line-height:11px;color:#a4a8ae;">0</span>
<span class="t" style="left:37.0px;top:478.7px;font-size:9.5px;line-height:11px;color:#a4a8ae;">4</span>
<span class="t" style="left:37.0px;top:489.0px;font-size:9.5px;line-height:11px;color:#a4a8ae;">0</span>
<span class="t" style="left:37.0px;top:538.7px;font-size:9.5px;line-height:11px;color:#a4a8ae;">5</span>
<span class="t" style="left:37.0px;top:549.0px;font-size:9.5px;line-height:11px;color:#a4a8ae;">0</span>
<span class="t" style="left:37.0px;top:598.7px;font-size:9.5px;line-height:11px;color:#a4a8ae;">6</span>
<span class="t" style="left:37.0px;top:609.0px;font-size:9.5px;line-height:11px;color:#a4a8ae;">0</span>
<span class="t" style="left:37.0px;top:658.7px;font-size:9.5px;line-height:11px;color:#a4a8ae;">7</span>
<span class="t" style="left:37.0px;top:669.0px;font-size:9.5px;line-height:11px;color:#a4a8ae;">0</span>
<svg style="left:0;top:0" width="0" height="0"><defs><linearGradient id="gbg" x1="0" y1="0" x2="0" y2="1"><stop offset="0" stop-color="#d2d2d6"/><stop offset=".2" stop-color="#d9d9dc"/><stop offset=".5" stop-color="#e6e6e8"/><stop offset=".8" stop-color="#efefef"/><stop offset="1" stop-color="#ededed"/></linearGradient><linearGradient id="gbx" x1="0" y1="0" x2="0" y2="1"><stop offset="0" stop-color="#fff" stop-opacity=".6"/><stop offset="1" stop-color="#fff" stop-opacity="0"/></linearGradient><linearGradient id="gsh" x1="0" y1="0" x2="0" y2="1"><stop offset="0" stop-color="#969696" stop-opacity="0"/><stop offset="1" stop-color="#969696" stop-opacity=".6"/></linearGradient><symbol id="pic" viewBox="0 0 695 348"><rect width="695" height="348" fill="#fff"/><rect width="347.5" height="348" fill="url(#gbg)"/><rect x="28" y="0" width="48" height="227" fill="#e6e6ee"/><rect x="76" y="0" width="27" height="224" fill="#d9d9e0"/><rect x="103" y="0" width="9" height="222" fill="#dedee4"/><path d="M28 227L76 227L112 221L112 236L76 244L28 236Z" fill="url(#gbx)"/><rect x="0" y="318" width="139" height="30" fill="url(#gsh)"/><rect x="137.2" y="0" width="414.4" height="57.5" fill="#dfb523"/><rect x="137.9" y="291" width="413.7" height="57" fill="#dfb523"/><text x="153.2" y="35.7" font-family="'Liberation Serif',serif" font-weight="700" font-size="28.5" textLength="373.3" lengthAdjust="spacing" fill="#fffdf6">Background Removal Services</text><text x="144.4" y="323" font-family="'Liberation Serif',serif" font-weight="700" font-size="17.3" textLength="285.7" lengthAdjust="spacing" fill="#fffdf6">E-commerce Image Editing Solutions By</text><text transform="translate(434.3 323) scale(0.566 1)" font-family="'Liberation Sans',sans-serif" font-weight="700" font-size="14.0" fill="#178a7a" opacity="1">CLIPPING</text><text transform="translate(483.6 323) scale(0.565 1)" font-family="'Liberation Sans',sans-serif" font-weight="700" font-size="14.0" fill="#178a7a" opacity="1">SOLUTIONS</text><g transform="translate(470.8 307) scale(1)" opacity="1" fill="none" stroke="#178a7a"><path d="M2 1l8 13M11 1l-8 13" stroke-width="1.7"/><circle cx="3" cy="16.5" r="2" stroke-width="1.4"/><circle cx="10.5" cy="16.5" r="2" stroke-width="1.4"/></g><text transform="translate(271.6 191.5) scale(0.595 1)" font-family="'Liberation Sans',sans-serif" font-weight="400" font-size="23.0" fill="#8fd0d0" opacity="0.26">CLIPPING</text><text transform="translate(360.6 191.5) scale(0.571 1)" font-family="'Liberation Sans',sans-serif" font-weight="400" font-size="23.0" fill="#8fd0d0" opacity="0.26">SOLUTIONS</text><g transform="translate(337.6 164) scale(1.7)" opacity="0.25" fill="none" stroke="#8fd0d0"><path d="M2 1l8 13M11 1l-8 13" stroke-width="1.7"/><circle cx="3" cy="16.5" r="2" stroke-width="1.4"/><circle cx="10.5" cy="16.5" r="2" stroke-width="1.4"/></g><g transform="translate(96.6 89) scale(0.2058)"><ellipse cx="900" cy="650" rx="150" ry="9" fill="#bdbdbd" opacity=".4"/><path d="M294 520L322 520L324 596L290 596Z" fill="#8f8079"/><path d="M301 520L308 520L308 596L301 596Z" fill="#e6e6e6"/><rect x="288" y="594" width="36" height="20" fill="#262222"/><path d="M800 636C880 642 960 638 1026 628" fill="none" stroke="#e9cfa9" stroke-width="9" stroke-linecap="round" stroke-linejoin="round"/><path d="M786 616C860 624 960 626 1028 617" fill="none" stroke="#d2222a" stroke-width="26" stroke-linecap="round" stroke-linejoin="round"/><path d="M800 628C880 634 960 632 1030 624" fill="none" stroke="#5a1a1a" stroke-width="3" stroke-linecap="butt" stroke-linejoin="round"/><path d="M784 590C860 588 910 600 896 610L800 608Z" fill="#d8a779"/><path d="M350 26C395 70 432 135 462 205C480 250 498 296 520 330" fill="none" stroke="#d8a779" stroke-width="26" stroke-linecap="butt" stroke-linejoin="round"/><path d="M262 250L352 234C445 282 548 362 624 452L574 486C500 405 400 332 318 306Z" fill="#d8a779"/><path d="M352 247L392 250C462 298 552 380 606 450L580 466C516 392 432 322 350 272Z" fill="#2c2c38"/><path d="M246 260C286 320 336 330 400 348C470 378 530 428 576 486" fill="none" stroke="#a9161d" stroke-width="40" stroke-linecap="butt" stroke-linejoin="round"/><path d="M236 250L262 250L330 300L300 330C270 310 246 284 236 250Z" fill="#d2222a"/><path d="M340 22C312 32 332 100 372 168C402 232 452 332 526 416" fill="none" stroke="#d2222a" stroke-width="24" stroke-linecap="round" stroke-linejoin="round"/><path d="M516 144L696 135" fill="none" stroke="#bb8a5e" stroke-width="11" stroke-linecap="round" stroke-linejoin="round"/><path d="M380 178L486 164L694 152" fill="none" stroke="#d2222a" stroke-width="31" stroke-linecap="round" stroke-linejoin="round"/><rect x="506" y="141" width="14" height="27" fill="#5a4a44"/><rect x="513" y="142" width="5" height="24" fill="#cfcfcf"/><path d="M603 420C660 394 720 388 776 394" fill="none" stroke="#bb8a5e" stroke-width="24" stroke-linecap="butt" stroke-linejoin="round"/><path d="M670 500C702 476 752 440 788 402" fill="none" stroke="#d2222a" stroke-width="37" stroke-linecap="round" stroke-linejoin="round"/><path d="M716 530C747 500 782 470 810 440" fill="none" stroke="#d2222a" stroke-width="35" stroke-linecap="round" stroke-linejoin="round"/><path d="M758 560C782 525 802 495 826 468" fill="none" stroke="#d2222a" stroke-width="33" stroke-linecap="round" stroke-linejoin="round"/><path d="M858 612C860 570 874 520 888 496" fill="none" stroke="#bb8a5e" stroke-width="22" stroke-linecap="round" stroke-linejoin="round"/><path d="M836 618C838 570 850 520 874 492" fill="none" stroke="#d2222a" stroke-width="33" stroke-linecap="round" stroke-linejoin="round"/><ellipse cx="640" cy="698" rx="250" ry="11" fill="#bdbdbd" opacity=".45"/><path d="M90 350L156 356C140 380 131 396 129 410L116 644L93 644L88 410C85 390 86 370 90 350Z" fill="#9c8578"/><path d="M94 350L154 356C140 378 133 394 130 406L90 406C88 390 90 370 94 350Z" fill="#c9a380"/><path d="M97 410L106 410L104 644L98 644Z" fill="#f2f2f2"/><path d="M113 410L127 410L115 644L109 644Z" fill="#7b5646"/><rect x="84" y="643" width="36" height="25" fill="#221e1f"/><path d="M420 692C560 704 780 696 884 670" fill="none" stroke="#e9cfa9" stroke-width="9" stroke-linecap="round" stroke-linejoin="round"/><path d="M176 58C222 95 258 155 276 195C296 240 316 305 332 380" fill="none" stroke="#d8a779" stroke-width="30" stroke-linecap="butt" stroke-linejoin="round"/><path d="M70 268L162 276C262 320 352 420 424 560L504 650L420 670C380 600 330 520 290 470C230 400 150 330 70 292Z" fill="#d8a779"/><path d="M160 286L198 290C268 338 336 420 388 520L348 534C300 440 236 362 156 308Z" fill="#2c2c38"/><path d="M440 614C540 600 690 610 744 634L700 664L450 670Z" fill="#d8a779"/><path d="M620 458C592 510 570 560 556 614" fill="none" stroke="#bb8a5e" stroke-width="31" stroke-linecap="butt" stroke-linejoin="round"/><path d="M660 498C642 540 630 585 626 620" fill="none" stroke="#bb8a5e" stroke-width="27" stroke-linecap="butt" stroke-linejoin="round"/><path d="M702 528C692 570 692 600 692 624" fill="none" stroke="#a9161d" stroke-width="25" stroke-linecap="butt" stroke-linejoin="round"/><path d="M777 560C780 590 778 610 778 630" fill="none" stroke="#bb8a5e" stroke-width="22" stroke-linecap="butt" stroke-linejoin="round"/><path d="M22 246C26 300 60 354 116 368L174 358C132 328 96 294 66 268Z" fill="#d2222a"/><path d="M48 300C66 340 92 360 120 368L150 404C100 388 66 350 48 300Z" fill="#a9161d"/><path d="M122 362C198 402 270 482 336 572C366 614 400 656 442 674C560 692 780 682 886 658" fill="none" stroke="#d2222a" stroke-width="30" stroke-linecap="round" stroke-linejoin="round"/><path d="M172 420C222 460 272 520 322 590C352 630 382 664 426 690" fill="none" stroke="#8a1218" stroke-width="6" stroke-linecap="butt" stroke-linejoin="round"/><path d="M430 690C560 702 780 694 884 672" fill="none" stroke="#5a1a1a" stroke-width="3" stroke-linecap="butt" stroke-linejoin="round"/><path d="M126 234C108 150 126 70 168 55" fill="none" stroke="#d2222a" stroke-width="28" stroke-linecap="round" stroke-linejoin="round"/><path d="M126 240C136 280 162 326 212 400" fill="none" stroke="#a9161d" stroke-width="18" stroke-linecap="butt" stroke-linejoin="round"/><path d="M250 204L495 183" fill="none" stroke="#bb8a5e" stroke-width="11" stroke-linecap="round" stroke-linejoin="round"/><path d="M36 255L176 232L496 194" fill="none" stroke="#d2222a" stroke-width="32" stroke-linecap="round" stroke-linejoin="round"/><rect x="197" y="208" width="13" height="42" fill="#4a3a38"/><rect x="205" y="210" width="6" height="37" fill="#d8d8d8"/><path d="M282 490C374 448 512 416 634 442" fill="none" stroke="#d2222a" stroke-width="38" stroke-linecap="round" stroke-linejoin="round"/><path d="M346 564C444 522 560 482 652 480" fill="none" stroke="#d2222a" stroke-width="38" stroke-linecap="round" stroke-linejoin="round"/><path d="M410 654C496 570 582 524 702 522" fill="none" stroke="#d2222a" stroke-width="38" stroke-linecap="round" stroke-linejoin="round"/><path d="M498 680C560 610 642 554 752 550C782 562 802 602 802 638" fill="none" stroke="#d2222a" stroke-width="37" stroke-linecap="round" stroke-linejoin="round"/><path d="M470 432l40-8 M520 492l36-10 M560 548l30-14 M610 606l26-18 M716 468l10-10 M756 500l10-10 M848 570l4-18" fill="none" stroke="#ffd0d0" stroke-width="6" opacity=".75" stroke-linecap="round"/></g><g transform="translate(321.5 -1)"><g transform="translate(96.6 89) scale(0.2058)"><ellipse cx="900" cy="650" rx="150" ry="9" fill="#bdbdbd" opacity=".4"/><path d="M294 520L322 520L324 596L290 596Z" fill="#8f8079"/><path d="M301 520L308 520L308 596L301 596Z" fill="#e6e6e6"/><rect x="288" y="594" width="36" height="20" fill="#262222"/><path d="M800 636C880 642 960 638 1026 628" fill="none" stroke="#e9cfa9" stroke-width="9" stroke-linecap="round" stroke-linejoin="round"/><path d="M786 616C860 624 960 626 1028 617" fill="none" stroke="#d2222a" stroke-width="26" stroke-linecap="round" stroke-linejoin="round"/><path d="M800 628C880 634 960 632 1030 624" fill="none" stroke="#5a1a1a" stroke-width="3" stroke-linecap="butt" stroke-linejoin="round"/><path d="M784 590C860 588 910 600 896 610L800 608Z" fill="#d8a779"/><path d="M350 26C395 70 432 135 462 205C480 250 498 296 520 330" fill="none" stroke="#d8a779" stroke-width="26" stroke-linecap="butt" stroke-linejoin="round"/><path d="M262 250L352 234C445 282 548 362 624 452L574 486C500 405 400 332 318 306Z" fill="#d8a779"/><path d="M352 247L392 250C462 298 552 380 606 450L580 466C516 392 432 322 350 272Z" fill="#2c2c38"/><path d="M246 260C286 320 336 330 400 348C470 378 530 428 576 486" fill="none" stroke="#a9161d" stroke-width="40" stroke-linecap="butt" stroke-linejoin="round"/><path d="M236 250L262 250L330 300L300 330C270 310 246 284 236 250Z" fill="#d2222a"/><path d="M340 22C312 32 332 100 372 168C402 232 452 332 526 416" fill="none" stroke="#d2222a" stroke-width="24" stroke-linecap="round" stroke-linejoin="round"/><path d="M516 144L696 135" fill="none" stroke="#bb8a5e" stroke-width="11" stroke-linecap="round" stroke-linejoin="round"/><path d="M380 178L486 164L694 152" fill="none" stroke="#d2222a" stroke-width="31" stroke-linecap="round" stroke-linejoin="round"/><rect x="506" y="141" width="14" height="27" fill="#5a4a44"/><rect x="513" y="142" width="5" height="24" fill="#cfcfcf"/><path d="M603 420C660 394 720 388 776 394" fill="none" stroke="#bb8a5e" stroke-width="24" stroke-linecap="butt" stroke-linejoin="round"/><path d="M670 500C702 476 752 440 788 402" fill="none" stroke="#d2222a" stroke-width="37" stroke-linecap="round" stroke-linejoin="round"/><path d="M716 530C747 500 782 470 810 440" fill="none" stroke="#d2222a" stroke-width="35" stroke-linecap="round" stroke-linejoin="round"/><path d="M758 560C782 525 802 495 826 468" fill="none" stroke="#d2222a" stroke-width="33" stroke-linecap="round" stroke-linejoin="round"/><path d="M858 612C860 570 874 520 888 496" fill="none" stroke="#bb8a5e" stroke-width="22" stroke-linecap="round" stroke-linejoin="round"/><path d="M836 618C838 570 850 520 874 492" fill="none" stroke="#d2222a" stroke-width="33" stroke-linecap="round" stroke-linejoin="round"/><ellipse cx="640" cy="698" rx="250" ry="11" fill="#bdbdbd" opacity=".45"/><path d="M90 350L156 356C140 380 131 396 129 410L116 644L93 644L88 410C85 390 86 370 90 350Z" fill="#9c8578"/><path d="M94 350L154 356C140 378 133 394 130 406L90 406C88 390 90 370 94 350Z" fill="#c9a380"/><path d="M97 410L106 410L104 644L98 644Z" fill="#f2f2f2"/><path d="M113 410L127 410L115 644L109 644Z" fill="#7b5646"/><rect x="84" y="643" width="36" height="25" fill="#221e1f"/><path d="M420 692C560 704 780 696 884 670" fill="none" stroke="#e9cfa9" stroke-width="9" stroke-linecap="round" stroke-linejoin="round"/><path d="M176 58C222 95 258 155 276 195C296 240 316 305 332 380" fill="none" stroke="#d8a779" stroke-width="30" stroke-linecap="butt" stroke-linejoin="round"/><path d="M70 268L162 276C262 320 352 420 424 560L504 650L420 670C380 600 330 520 290 470C230 400 150 330 70 292Z" fill="#d8a779"/><path d="M160 286L198 290C268 338 336 420 388 520L348 534C300 440 236 362 156 308Z" fill="#2c2c38"/><path d="M440 614C540 600 690 610 744 634L700 664L450 670Z" fill="#d8a779"/><path d="M620 458C592 510 570 560 556 614" fill="none" stroke="#bb8a5e" stroke-width="31" stroke-linecap="butt" stroke-linejoin="round"/><path d="M660 498C642 540 630 585 626 620" fill="none" stroke="#bb8a5e" stroke-width="27" stroke-linecap="butt" stroke-linejoin="round"/><path d="M702 528C692 570 692 600 692 624" fill="none" stroke="#a9161d" stroke-width="25" stroke-linecap="butt" stroke-linejoin="round"/><path d="M777 560C780 590 778 610 778 630" fill="none" stroke="#bb8a5e" stroke-width="22" stroke-linecap="butt" stroke-linejoin="round"/><path d="M22 246C26 300 60 354 116 368L174 358C132 328 96 294 66 268Z" fill="#d2222a"/><path d="M48 300C66 340 92 360 120 368L150 404C100 388 66 350 48 300Z" fill="#a9161d"/><path d="M122 362C198 402 270 482 336 572C366 614 400 656 442 674C560 692 780 682 886 658" fill="none" stroke="#d2222a" stroke-width="30" stroke-linecap="round" stroke-linejoin="round"/><path d="M172 420C222 460 272 520 322 590C352 630 382 664 426 690" fill="none" stroke="#8a1218" stroke-width="6" stroke-linecap="butt" stroke-linejoin="round"/><path d="M430 690C560 702 780 694 884 672" fill="none" stroke="#5a1a1a" stroke-width="3" stroke-linecap="butt" stroke-linejoin="round"/><path d="M126 234C108 150 126 70 168 55" fill="none" stroke="#d2222a" stroke-width="28" stroke-linecap="round" stroke-linejoin="round"/><path d="M126 240C136 280 162 326 212 400" fill="none" stroke="#a9161d" stroke-width="18" stroke-linecap="butt" stroke-linejoin="round"/><path d="M250 204L495 183" fill="none" stroke="#bb8a5e" stroke-width="11" stroke-linecap="round" stroke-linejoin="round"/><path d="M36 255L176 232L496 194" fill="none" stroke="#d2222a" stroke-width="32" stroke-linecap="round" stroke-linejoin="round"/><rect x="197" y="208" width="13" height="42" fill="#4a3a38"/><rect x="205" y="210" width="6" height="37" fill="#d8d8d8"/><path d="M282 490C374 448 512 416 634 442" fill="none" stroke="#d2222a" stroke-width="38" stroke-linecap="round" stroke-linejoin="round"/><path d="M346 564C444 522 560 482 652 480" fill="none" stroke="#d2222a" stroke-width="38" stroke-linecap="round" stroke-linejoin="round"/><path d="M410 654C496 570 582 524 702 522" fill="none" stroke="#d2222a" stroke-width="38" stroke-linecap="round" stroke-linejoin="round"/><path d="M498 680C560 610 642 554 752 550C782 562 802 602 802 638" fill="none" stroke="#d2222a" stroke-width="37" stroke-linecap="round" stroke-linejoin="round"/><path d="M470 432l40-8 M520 492l36-10 M560 548l30-14 M610 606l26-18 M716 468l10-10 M756 500l10-10 M848 570l4-18" fill="none" stroke="#ffd0d0" stroke-width="6" opacity=".75" stroke-linecap="round"/></g></g></symbol></defs></svg>
<svg style="left:208.4px;top:235.7px" width="695" height="348" viewBox="0 0 695 348"><use href="#pic" width="695" height="348"/></svg>
<div id="gutter" class="abs"></div>
<div id="status" class="abs"></div>
<div class="abs" style="left:82px;top:711px;width:183px;height:16px;background:#505050"></div>
<div class="abs" style="left:34px;top:712px;width:48px;height:15px;background:#424242"></div>
<span class="t" style="left:44.0px;top:712.5px;font-size:10.5px;line-height:13px;color:#e4e4e4;transform:scaleX(0.930);transform-origin:0 50%;">8.33%</span>
<span class="t" style="left:128.3px;top:712.5px;font-size:10.5px;line-height:13px;color:#cfcfcf;transform:scaleX(0.921);transform-origin:0 50%;">Doc: 99.3M/75.7M</span>
<svg style="left:254px;top:713px" width="8" height="12" viewBox="0 0 8 12"><path d="M2 1.5l4 4.5-4 4.5" fill="none" stroke="#c8c8c8" stroke-width="1.1"/></svg>

<div class="abs" style="left:1076px;top:63px;width:3px;height:666px;background:#3a3a3a;"></div>
<div class="abs" style="left:1077px;top:75px;width:1px;height:654px;background:#4b4b4b;"></div>
<div class="abs" style="left:1116px;top:75px;width:3px;height:654px;background:#3a3a3a;"></div>
<div class="abs" style="left:1117px;top:75px;width:1px;height:654px;background:#4b4b4b;"></div>
<div class="abs" style="left:1060px;top:711px;width:16px;height:16px;background:#535353;"></div>
<div class="abs" style="left:1079px;top:63px;width:40px;height:12px;background:#424242;"></div>
<div class="abs" style="left:1079px;top:75px;width:37px;height:654px;background:#535353;"></div>
<div class="abs" style="left:1079px;top:115px;width:37px;height:1px;background:#383838;"></div>
<div class="abs" style="left:1079px;top:156px;width:37px;height:1px;background:#383838;"></div>
<div class="abs" style="left:1079px;top:197px;width:37px;height:1px;background:#383838;"></div>
<div class="abs" style="left:1079px;top:266px;width:37px;height:1px;background:#383838;"></div>
<div class="abs" style="left:1079px;top:74.5px;width:37px;height:1px;background:#383838;"></div>
<div class="abs" style="left:1119px;top:63px;width:232px;height:12px;background:#424242;"></div>
<div class="abs" style="left:1119px;top:75px;width:232px;height:28px;background:#424242;"></div>
<div class="abs" style="left:1119px;top:102px;width:232px;height:1px;background:#383838;"></div>
<div class="abs" style="left:1119px;top:75px;width:65.5px;height:28px;background:#535353;"></div>
<div class="abs" style="left:1184px;top:75px;width:1px;height:27px;background:#383838;"></div>
<div class="abs" style="left:1248px;top:75px;width:1px;height:27px;background:#383838;"></div>
<div class="abs" style="left:1318px;top:75px;width:1px;height:27px;background:#383838;"></div>
<span class="t" style="left:1128.3px;top:82.2px;font-size:10.5px;line-height:13px;color:#f2f2f2;font-weight:700;transform:scaleX(0.950);transform-origin:0 50%;">Navigator</span>
<span class="t" style="left:1193.3px;top:82.2px;font-size:10.5px;line-height:13px;color:#b2b2b2;font-weight:700;transform:scaleX(0.938);transform-origin:0 50%;">Histogram</span>
<span class="t" style="left:1257.2px;top:82.2px;font-size:10.5px;line-height:13px;color:#b2b2b2;font-weight:700;transform:scaleX(0.909);transform-origin:0 50%;">Adjustments</span>
<div class="abs" style="left:1119px;top:375px;width:232px;height:1px;background:#383838;"></div>
<div class="abs" style="left:1119px;top:400px;width:232px;height:3px;background:#383838;"></div>
<div class="abs" style="left:1120px;top:381px;width:55px;height:12px;background:#454545;"></div>
<span class="t" style="left:1122.9px;top:380.8px;font-size:10.5px;line-height:13px;color:#e8e8e8;transform:scaleX(0.937);transform-origin:0 50%;">8.33%</span>
<div class="abs" style="left:1176px;top:376px;width:1px;height:24px;background:#383838;"></div>
<div class="abs" style="left:1207px;top:384px;width:101px;height:3px;background:#7c7c7c;border-radius:1px"></div>
<div class="abs" style="left:1119px;top:403px;width:232px;height:28px;background:#424242;"></div>
<div class="abs" style="left:1119px;top:430px;width:232px;height:1px;background:#383838;"></div>
<div class="abs" style="left:1119px;top:403px;width:47px;height:28px;background:#535353;"></div>
<div class="abs" style="left:1166px;top:403px;width:1px;height:27px;background:#383838;"></div>
<div class="abs" style="left:1210px;top:403px;width:1px;height:27px;background:#383838;"></div>
<div class="abs" style="left:1271px;top:403px;width:1px;height:27px;background:#383838;"></div>
<span class="t" style="left:1128.6px;top:410.3px;font-size:10.5px;line-height:13px;color:#f2f2f2;font-weight:700;transform:scaleX(0.821);transform-origin:0 50%;">Layers</span>
<span class="t" style="left:1175.3px;top:410.3px;font-size:10.5px;line-height:13px;color:#b2b2b2;font-weight:700;transform:scaleX(0.871);transform-origin:0 50%;">Paths</span>
<span class="t" style="left:1220.2px;top:410.3px;font-size:10.5px;line-height:13px;color:#b2b2b2;font-weight:700;transform:scaleX(0.867);transform-origin:0 50%;">Channels</span>
<div class="abs" style="left:1123px;top:439.5px;width:89.5px;height:18px;background:#4f4f4f;border:1px solid #686868;border-radius:3px"></div>
<span class="t" style="left:1145.0px;top:442.1px;font-size:10.6px;line-height:13px;color:#9c9c9c;transform:scaleX(0.915);transform-origin:0 50%;">Kind</span>
<div class="abs" style="left:1119px;top:462px;width:232px;height:1px;background:#383838;"></div>
<div class="abs" style="left:1123px;top:466.4px;width:130.5px;height:18px;background:#4f4f4f;border:1px solid #646464;border-radius:3px"></div>
<span class="t" style="left:1131.2px;top:469.1px;font-size:10.6px;line-height:13px;color:#8e8e8e;transform:scaleX(0.908);transform-origin:0 50%;">Normal</span>
<span class="t" style="left:1261.4px;top:469.1px;font-size:10.6px;line-height:13px;color:#8e8e8e;transform:scaleX(0.921);transform-origin:0 50%;">Opacity:</span>
<div class="abs" style="left:1302px;top:466.4px;width:52px;height:18px;background:#4f4f4f;border:1px solid #646464;border-radius:3px"></div>
<div class="abs" style="left:1337px;top:467px;width:1px;height:17px;background:#646464;"></div>
<span class="t" style="left:1306.8px;top:469.6px;font-size:10.4px;line-height:12px;color:#7e7e7e;transform:scaleX(0.899);transform-origin:0 50%;">100%</span>
<div class="abs" style="left:1119px;top:489px;width:232px;height:1px;background:#383838;"></div>
<span class="t" style="left:1125.5px;top:496.1px;font-size:10.6px;line-height:13px;color:#8e8e8e;transform:scaleX(0.880);transform-origin:0 50%;">Lock:</span>
<span class="t" style="left:1283.2px;top:496.1px;font-size:10.6px;line-height:13px;color:#8e8e8e;transform:scaleX(0.849);transform-origin:0 50%;">Fill:</span>
<div class="abs" style="left:1302px;top:493.8px;width:52px;height:17.6px;background:#4f4f4f;border:1px solid #646464;border-radius:3px"></div>
<div class="abs" style="left:1337px;top:494.4px;width:1px;height:16.4px;background:#646464;"></div>
<span class="t" style="left:1306.8px;top:496.6px;font-size:10.4px;line-height:12px;color:#7e7e7e;transform:scaleX(0.899);transform-origin:0 50%;">100%</span>
<div class="abs" style="left:1119px;top:516px;width:224px;height:186px;background:#4f4f4f;"></div>
<div class="abs" style="left:1119px;top:516.5px;width:232px;height:1px;background:#383838;"></div>
<div class="abs" style="left:1150px;top:518px;width:193px;height:24px;background:#6b6b6b;"></div>
<div class="abs" style="left:1149px;top:518px;width:1px;height:24px;background:#383838;"></div>
<div class="abs" style="left:1119px;top:542px;width:224px;height:1px;background:#444;"></div>
<div class="abs" style="left:1153px;top:521px;width:32px;height:16.6px;background:#fff;border:1px solid #111"></div>
<svg style="left:1154.5px;top:522px" width="29" height="14.6" viewBox="0 0 695 348" preserveAspectRatio="none"><use href="#pic" width="695" height="348"/></svg>
<span class="t" style="left:1196.2px;top:523.8px;font-size:10.6px;line-height:13px;color:#f2f2f2;font-style:italic;transform:scaleX(0.927);transform-origin:0 50%;">Background</span>
<div class="abs" style="left:1119px;top:702px;width:232px;height:1px;background:#383838;"></div>
<svg style="left:1124px;top:182px" width="229" height="114.6" viewBox="0 0 695 348" preserveAspectRatio="none"><use href="#pic" width="695" height="348"/></svg>
<div class="abs" style="left:1123.6px;top:181.7px;width:232px;height:115.2px;background:transparent;border:2px solid #f0413f"></div>
<svg style="left:0;top:0" width="1351" height="729" viewBox="0 0 1351 729"><path d="M1106 66.4l-2.3 2.2 2.3 2.2 M1109.8 66.4l-2.3 2.2 2.3 2.2" fill="none" stroke="#cdcdcd" stroke-width="1.15"/><path d="M1344 66.4l2.3 2.2-2.3 2.2 M1347.8 66.4l2.3 2.2-2.3 2.2" fill="none" stroke="#cdcdcd" stroke-width="1.15"/><rect x="1088.0" y="78.2" width="1" height="3.8" fill="#424242"/><rect x="1090.0" y="78.2" width="1" height="3.8" fill="#424242"/><rect x="1092.1" y="78.2" width="1" height="3.8" fill="#424242"/><rect x="1094.2" y="78.2" width="1" height="3.8" fill="#424242"/><rect x="1096.2" y="78.2" width="1" height="3.8" fill="#424242"/><rect x="1098.2" y="78.2" width="1" height="3.8" fill="#424242"/><rect x="1100.3" y="78.2" width="1" height="3.8" fill="#424242"/><rect x="1102.3" y="78.2" width="1" height="3.8" fill="#424242"/><rect x="1104.4" y="78.2" width="1" height="3.8" fill="#424242"/><rect x="1106.5" y="78.2" width="1" height="3.8" fill="#424242"/><rect x="1088.0" y="119.3" width="1" height="3.8" fill="#424242"/><rect x="1090.0" y="119.3" width="1" height="3.8" fill="#424242"/><rect x="1092.1" y="119.3" width="1" height="3.8" fill="#424242"/><rect x="1094.2" y="119.3" width="1" height="3.8" fill="#424242"/><rect x="1096.2" y="119.3" width="1" height="3.8" fill="#424242"/><rect x="1098.2" y="119.3" width="1" height="3.8" fill="#424242"/><rect x="1100.3" y="119.3" width="1" height="3.8" fill="#424242"/><rect x="1102.3" y="119.3" width="1" height="3.8" fill="#424242"/><rect x="1104.4" y="119.3" width="1" height="3.8" fill="#424242"/><rect x="1106.5" y="119.3" width="1" height="3.8" fill="#424242"/><rect x="1088.0" y="160.4" width="1" height="3.8" fill="#424242"/><rect x="1090.0" y="160.4" width="1" height="3.8" fill="#424242"/><rect x="1092.1" y="160.4" width="1" height="3.8" fill="#424242"/><rect x="1094.2" y="160.4" width="1" height="3.8" fill="#424242"/><rect x="1096.2" y="160.4" width="1" height="3.8" fill="#424242"/><rect x="1098.2" y="160.4" width="1" height="3.8" fill="#424242"/><rect x="1100.3" y="160.4" width="1" height="3.8" fill="#424242"/><rect x="1102.3" y="160.4" width="1" height="3.8" fill="#424242"/><rect x="1104.4" y="160.4" width="1" height="3.8" fill="#424242"/><rect x="1106.5" y="160.4" width="1" height="3.8" fill="#424242"/><rect x="1088.0" y="201.4" width="1" height="3.8" fill="#424242"/><rect x="1090.0" y="201.4" width="1" height="3.8" fill="#424242"/><rect x="1092.1" y="201.4" width="1" height="3.8" fill="#424242"/><rect x="1094.2" y="201.4" width="1" height="3.8" fill="#424242"/><rect x="1096.2" y="201.4" width="1" height="3.8" fill="#424242"/><rect x="1098.2" y="201.4" width="1" height="3.8" fill="#424242"/><rect x="1100.3" y="201.4" width="1" height="3.8" fill="#424242"/><rect x="1102.3" y="201.4" width="1" height="3.8" fill="#424242"/><rect x="1104.4" y="201.4" width="1" height="3.8" fill="#424242"/><rect x="1106.5" y="201.4" width="1" height="3.8" fill="#424242"/><rect x="1342" y="85.6" width="9" height="1" fill="#cfcfcf"/><rect x="1342" y="87.6" width="9" height="1" fill="#cfcfcf"/><rect x="1342" y="89.6" width="9" height="1" fill="#cfcfcf"/><rect x="1342" y="91.6" width="9" height="1" fill="#cfcfcf"/><rect x="1342" y="413.7" width="9" height="1" fill="#cfcfcf"/><rect x="1342" y="415.7" width="9" height="1" fill="#cfcfcf"/><rect x="1342" y="417.7" width="9" height="1" fill="#cfcfcf"/><rect x="1342" y="419.7" width="9" height="1" fill="#cfcfcf"/><g fill="none" stroke="#d8d8d8" stroke-width="1"><rect x="1092.5" y="90.6" width="4" height="3.8"/><rect x="1092.5" y="96.8" width="4" height="3.8"/></g><rect x="1092" y="102.2" width="5" height="4.8" fill="#d8d8d8"/><path d="M1100.4 105.2Q1108 101 1106.2 93L1103.4 93.6Q1105 100.4 1100.4 105.2Z" fill="#d8d8d8"/><path d="M1099.6 93.2L1105.6 90.4L1105 96Z" fill="#d8d8d8"/><g fill="none" stroke="#d8d8d8" stroke-width="1"><path d="M1095.5 131.2l4.2 2v5.4l-4.2 2.2-4.2-2.2v-5.4z M1091.3 133.2l4.2 2 4.2-2 M1095.5 135.2v5.6"/></g><rect x="1102.2" y="131" width="3.8" height="3.8" fill="#d8d8d8"/><rect x="1102.2" y="136.2" width="3.8" height="3.8" fill="#d8d8d8"/><rect x="1091" y="143" width="15" height="4" fill="#d8d8d8"/><path d="M1102.4 144.2h3l-1.5 1.8z" fill="#444"/><g fill="none" stroke="#d8d8d8" stroke-width="1.1"><path d="M1090.2 172.4h8.6l8 12.4 M1090.2 172.4v7.6l8.6 7.6 M1090.2 172.4l8.6 9.4"/><rect x="1098.8" y="178.8" width="7.6" height="9.2"/><path d="M1098.8 178.8l7.6 9.2"/></g><text x="1090.6" y="227.4" font-family="'Liberation Sans',sans-serif" font-size="17.5" fill="#d8d8d8">A</text><rect x="1103.6" y="213" width="1.2" height="17" fill="#d8d8d8"/><path d="M1097.6 240.4h7.4v1.4h-1v13.4h-1.5v-13.4h-1.8v13.4h-1.5v-7.2h-1.4q-3.2-0.6-3.2-3.8q0.2-3.2 3-3.8z" fill="#d8d8d8"/><path d="M1182.8 390l3.2-3.4 1.8 1.6 2.4-2.8 3 4.6z" fill="#d8d8d8"/><path d="M1317.6 391l5.6-6 2.6 2.6 4-4.4 5.4 7.8z" fill="#d8d8d8"/><path d="M1240 385.6l5.4 6v3.4q0 1.4-1.4 1.4h-8q-1.4 0-1.4-1.4v-3.4z" fill="#fff" stroke="#333" stroke-width="0.8"/><circle cx="1137.6" cy="446.4" r="3.2" fill="none" stroke="#9a9a9a" stroke-width="1.4"/><path d="M1135.4 449l-3.2 3.4" stroke="#9a9a9a" stroke-width="1.7" stroke-linecap="round"/><path d="M1202.2 447l3.6 3.4 3.6-3.4" fill="none" stroke="#6e6e6e" stroke-width="1"/><rect x="1223.5" y="443.5" width="11.4" height="9" fill="none" stroke="#9a9a9a" stroke-width="1"/><path d="M1225 451l2.4-3 1.6 1.6 1.8-2.4 2.6 3.8z" fill="#9a9a9a"/><circle cx="1253.3" cy="448.6" r="5" fill="none" stroke="#9a9a9a" stroke-width="1.1"/><path d="M1256.9 445a5 5 0 0 1-7.1 7.1z" fill="#9a9a9a"/><path d="M1272.7 443.6h10.6v3.2h-1l-0.5-1.6h-2.5v6.6l1.5 0.4v1.2h-5.6v-1.2l1.5-0.4v-6.6h-2.5l-0.5 1.6h-1z" fill="#9a9a9a"/><rect x="1297.4" y="444.6" width="8.2" height="7.8" fill="none" stroke="#9a9a9a" stroke-width="1.1"/><rect x="1296" y="443.2" width="2.8" height="2.8" fill="#535353" stroke="#9a9a9a" stroke-width="0.9"/><rect x="1304.2" y="443.2" width="2.8" height="2.8" fill="#535353" stroke="#9a9a9a" stroke-width="0.9"/><rect x="1296" y="451" width="2.8" height="2.8" fill="#535353" stroke="#9a9a9a" stroke-width="0.9"/><rect x="1304.2" y="451" width="2.8" height="2.8" fill="#535353" stroke="#9a9a9a" stroke-width="0.9"/><path d="M1324.5 443.5h4l2.6 2.6v8.4h-4.4" fill="none" stroke="#9a9a9a" stroke-width="1"/><path d="M1328.3 443.5v2.8h2.8" fill="none" stroke="#9a9a9a" stroke-width="0.9"/><rect x="1321" y="449" width="5.6" height="5.8" fill="#9a9a9a"/><rect x="1344.7" y="441" width="10" height="16" rx="4" fill="#4a4a4a" stroke="#444" stroke-width="1"/><circle cx="1349.6" cy="444.4" r="3.4" fill="#8e8e8e"/><path d="M1243.4 474l3.5 3.4 3.5-3.4" fill="none" stroke="#6e6e6e" stroke-width="1"/><path d="M1341.8 474l3.5 3.4 3.5-3.4" fill="none" stroke="#6e6e6e" stroke-width="1"/><path d="M1341.8 501l3.5 3.4 3.5-3.4" fill="none" stroke="#6e6e6e" stroke-width="1"/><rect x="1158.3" y="497.3" width="10.4" height="10.4" fill="none" stroke="#9a9a9a" stroke-width="1"/><rect x="1158.80" y="497.80" width="3.15" height="3.15" fill="#9a9a9a"/><rect x="1165.10" y="497.80" width="3.15" height="3.15" fill="#9a9a9a"/><rect x="1161.95" y="500.95" width="3.15" height="3.15" fill="#9a9a9a"/><rect x="1158.80" y="504.10" width="3.15" height="3.15" fill="#9a9a9a"/><rect x="1165.10" y="504.10" width="3.15" height="3.15" fill="#9a9a9a"/><path d="M1191.4 497.6l-5.6 6.4" stroke="#9a9a9a" stroke-width="2" stroke-linecap="round"/><path d="M1185.6 503.6q-2.2-0.6-3.2 1.2q-0.6 2-2.6 3.8q4 0.6 6-1.4q1.4-1.8-0.2-3.6z" fill="#9a9a9a"/><g transform="translate(1201 496) scale(0.867)"><path d="M7.5 0l3 3.2h-2.3v3.6h3.6v-2.3l3.2 3-3.2 3v-2.3h-3.6v3.6h2.3l-3 3.2-3-3.2h2.3v-3.6h-3.6v2.3l-3.2-3 3.2-3v2.3h3.6v-3.6h-2.3z" fill="#9a9a9a"/></g><g fill="none" stroke="#9a9a9a" stroke-width="1.1"><path d="M1226.4 496.4v12.8 M1223.2 499.6h8.6l2.2 2.4v4 M1226.4 506h7.6v-4 M1234 507.4v2" /><path d="M1231.6 499.6v2.6h2.4" stroke-width="0.8"/><path d="M1235.4 506h1.6 M1234 496.4v1.8" stroke-dasharray="1 1"/></g><rect x="1247" y="501.8" width="10" height="6.6" fill="#9a9a9a"/><path d="M1249.2 501.8v-1.8a2.8 2.8 0 0 1 5.6 0v1.8" fill="none" stroke="#9a9a9a" stroke-width="1.4"/><rect x="1251.3" y="504.2" width="1.5" height="1.8" fill="#535353"/><path d="M1128 529.6q6.6-7.4 13.2 0q-6.6 7.4-13.2 0z" fill="#e8e8e8"/><circle cx="1134.6" cy="529.3" r="2.7" fill="#4f4f4f"/><circle cx="1135.4" cy="528.3" r="0.9" fill="#e8e8e8"/><rect x="1316.4" y="528.8" width="9.2" height="6.6" fill="none" stroke="#ececec" stroke-width="1.1"/><path d="M1318.4 528.8v-1.6a2.6 2.6 0 0 1 5.2 0v1.6" fill="none" stroke="#ececec" stroke-width="1.1"/><rect x="1320.2" y="531.2" width="1.6" height="1.8" fill="#ececec"/><g fill="none" stroke="#8c8c8c" stroke-width="1.3"><rect x="1155.4" y="711.2" width="7.4" height="6.2" rx="3.1"/><rect x="1161.2" y="711.2" width="7.4" height="6.2" rx="3.1"/><path d="M1158.6 714.3h6.8"/></g><text x="1183.4" y="719" font-family="'Liberation Serif',serif" font-style="italic" font-size="14.5" fill="#8c8c8c">fx</text><path d="M1196.4 722.6h3l-1.5 1.6z" fill="#6e6e6e"/><rect x="1208.8" y="709.2" width="13.2" height="9.6" fill="#dcdcdc"/><circle cx="1215.4" cy="714" r="3" fill="#444"/><circle cx="1243.4" cy="714.5" r="5.2" fill="none" stroke="#e0e0e0" stroke-width="1.2"/><path d="M1247.1 710.8a5.2 5.2 0 0 1-7.4 7.4z" fill="#e0e0e0"/><path d="M1251 722.6h3.2l-1.6 1.7z" fill="#f0f0f0"/><path d="M1263.8 710.6h12.2v8.2h-12.2z M1263.8 710.6v-1.6h5.4l0.8 1.6z" fill="#dcdcdc"/><path d="M1292.4 710.2h9.4v9.4h-5.6l-3.8-3.8z" fill="none" stroke="#e6e6e6" stroke-width="1.2"/><path d="M1292.4 715.8h3.8v3.8" fill="none" stroke="#e6e6e6" stroke-width="1"/><g fill="none" stroke="#8c8c8c" stroke-width="1.1"><path d="M1319.4 712.2h8.4l-0.6 8.6h-7.2z M1318 711.4h11.2 M1321.6 711.2v-1.8h4v1.8 M1321.8 714v5 M1323.6 714v5 M1325.4 714v5"/></g></svg>
<div class="abs" style="left:0px;top:727px;width:1351px;height:2px;background:#24261b;"></div>

<div id="menu" class="abs">
<div class="row" style="top:2px"><span class="l" style="letter-spacing:-0.17px">New...</span><span class="r" style="letter-spacing:0.17px;margin-right:-0.17px">Ctrl+N</span></div>
<div class="row" style="top:21px"><span class="l" style="letter-spacing:-0.34px">Open...</span><span class="r" style="letter-spacing:0.04px;margin-right:-0.04px">Ctrl+O</span></div>
<div class="row" style="top:40px"><span class="l" style="letter-spacing:-0.24px">Browse in Bridge...</span><span class="r" style="letter-spacing:0.24px;margin-right:-0.24px">Alt+Ctrl+O</span></div>
<div class="row" style="top:59px"><span class="l" style="letter-spacing:-0.31px">Open As...</span><span class="r" style="letter-spacing:0.21px;margin-right:-0.21px">Alt+Shift+Ctrl+O</span></div>
<div class="row" style="top:78px"><span class="l" style="letter-spacing:-0.25px">Open as Smart Object...</span></div>
<div class="row" style="top:97px"><span class="l" style="letter-spacing:-0.33px;top:4px">Open Recent</span><i class="arr"></i></div>
<div class="sep" style="top:119px"></div>
<div class="row" style="top:125px"><span class="l" style="letter-spacing:-0.38px">Close</span><span class="r" style="letter-spacing:-0.02px;margin-right:0.02px">Ctrl+W</span></div>
<div class="row" style="top:144px"><span class="l" style="letter-spacing:-0.17px">Close All</span><span class="r" style="letter-spacing:0.33px;margin-right:-0.33px">Alt+Ctrl+W</span></div>
<div class="row" style="top:163px"><span class="l" style="letter-spacing:-0.20px">Close and Go to Bridge...</span><span class="r" style="letter-spacing:0.18px;margin-right:-0.18px">Shift+Ctrl+W</span></div>
<div class="row" style="top:182px"><span class="l" style="letter-spacing:-0.38px">Save</span><span class="r" style="letter-spacing:-0.15px;margin-right:0.15px">Ctrl+S</span></div>
<div class="row hl" style="top:201px"><span class="l" style="letter-spacing:-0.38px">Save As...</span><span class="r" style="letter-spacing:0.03px;margin-right:-0.03px">Shift+Ctrl+S</span></div>
<div class="row dis" style="top:220px"><span class="l" style="letter-spacing:-0.31px">Check In...</span></div>
<div class="row" style="top:239px"><span class="l" style="letter-spacing:-0.38px">Revert</span><span class="r" style="letter-spacing:-0.15px;margin-right:0.15px">F12</span></div>
<div class="sep" style="top:261px"></div>
<div class="row" style="top:267px"><span class="l" style="letter-spacing:-0.38px;top:4px">Export</span><i class="arr"></i></div>
<div class="row" style="top:286px"><span class="l" style="letter-spacing:-0.38px;top:4px">Generate</span><i class="arr"></i></div>
<div class="row" style="top:305px"><span class="l" style="letter-spacing:-0.37px">Share on Behance...</span></div>
<div class="sep" style="top:327px"></div>
<div class="row" style="top:333px"><span class="l" style="letter-spacing:-0.27px">Search Adobe Stock...</span></div>
<div class="row" style="top:352px"><span class="l" style="letter-spacing:-0.32px">Place Embedded...</span></div>
<div class="row" style="top:371px"><span class="l" style="letter-spacing:-0.32px">Place Linked...</span></div>
<div class="row dis" style="top:390px"><span class="l" style="letter-spacing:-0.38px">Package...</span></div>
<div class="sep" style="top:412px"></div>
<div class="row" style="top:418px"><span class="l" style="letter-spacing:0.00px;top:4px">Automate</span><i class="arr"></i></div>
<div class="row" style="top:437px"><span class="l" style="letter-spacing:-0.38px;top:4px">Scripts</span><i class="arr"></i></div>
<div class="row" style="top:456px"><span class="l" style="letter-spacing:0.00px;top:4px">Import</span><i class="arr"></i></div>
<div class="sep" style="top:478px"></div>
<div class="row" style="top:484px"><span class="l" style="letter-spacing:-0.22px">File Info...</span><span class="r" style="letter-spacing:0.26px;margin-right:-0.26px">Alt+Shift+Ctrl+I</span></div>
<div class="sep" style="top:506px"></div>
<div class="row" style="top:512px"><span class="l" style="letter-spacing:-0.20px">Print...</span><span class="r" style="letter-spacing:-0.14px;margin-right:0.14px">Ctrl+P</span></div>
<div class="row" style="top:531px"><span class="l" style="letter-spacing:-0.13px">Print One Copy</span><span class="r" style="letter-spacing:0.15px;margin-right:-0.15px">Alt+Shift+Ctrl+P</span></div>
<div class="sep" style="top:553px"></div>
<div class="row" style="top:559px"><span class="l" style="letter-spacing:-0.38px">Exit</span><span class="r" style="letter-spacing:0.20px;margin-right:-0.20px">Ctrl+Q</span></div>

</div>
<svg style="left:0;top:0" width="1351" height="729" viewBox="0 0 1351 729">
<rect x="29.5" y="221.5" width="275.2" height="26" rx="2.5" fill="none" stroke="#fb0007" stroke-width="3"/>
<path d="M43.7 12.3L55.6 5.3L56.2 8.3L102 -0.2L113 -0.4L113 0.9L57.5 12Z" fill="#fb0007"/>
</svg>

</div>
</body>
</html>
